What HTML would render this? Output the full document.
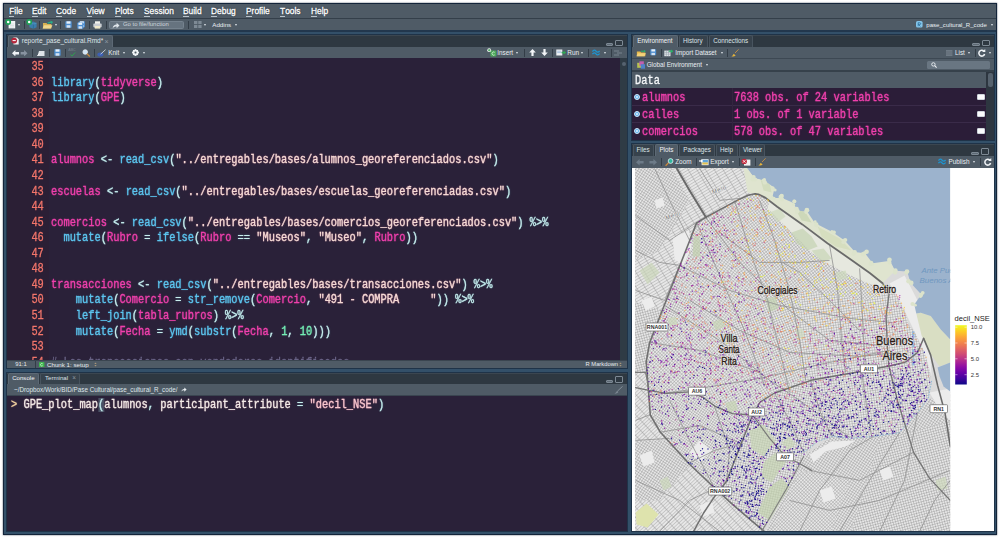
<!DOCTYPE html>
<html lang="en">
<head>
<meta charset="utf-8">
<title>RStudio - pase_cultural_R_code</title>
<style>
*{box-sizing:border-box;margin:0;padding:0}
html,body{width:1000px;height:538px;overflow:hidden;background:#fff}
body{position:relative;font-family:"Liberation Sans",sans-serif;font-size:6.6px;color:#e8edf1}
.a{position:absolute}
#win{left:3px;top:3px;width:994px;height:532px;background:#335069;border:1px solid #13243a;box-shadow:0 0 1.5px rgba(20,35,55,.8)}
.pn{position:absolute;outline:1px solid #1f3348}
.bar{background:#4f5b66}
.strip{background:#2e3841}
.code{background:#2a2139}
.menu span{position:absolute;top:2.95px;font-size:8.4px;line-height:1;color:#fff;-webkit-text-stroke:.28px #fff;text-shadow:0 0 1.5px rgba(20,30,40,.9)}
.menu span u{text-decoration:none;display:inline-block;line-height:1;padding-bottom:.6px;border-bottom:.8px solid #b9c3cb}
.t{position:absolute;white-space:nowrap;color:#e9eef2;line-height:1}
.sep{position:absolute;width:1px;height:8px;background:#333d47}
.tab{position:absolute;height:11.5px;background:#37424c;border:1px solid #48545f;border-bottom:none;border-radius:2px 2px 0 0}
.tab.on{background:#4f5b66;border-color:#5d6975}
.mono{font-family:"Liberation Mono",monospace;font-size:12.1px;white-space:pre;transform-origin:0 0;transform:scaleX(.8567);line-height:15.57px;letter-spacing:0;-webkit-text-stroke:.3px}
.ln{position:absolute;left:0;top:0;width:47.5px;text-align:right;color:#f4766b}
.v{color:#f040ad;text-shadow:0 0 2px rgba(236,63,169,.55)}
.f{color:#5cc6f0;text-shadow:0 0 2px rgba(95,195,236,.5)}
.o{color:#c9efef;text-shadow:0 0 2px rgba(120,220,230,.5)}
.s{color:#f6dcd6;text-shadow:0 0 2px rgba(250,120,160,.6)}
.n{color:#74efb6;text-shadow:0 0 2px rgba(116,239,182,.5)}
.c{color:#6a6487}
.w{color:#f3ece8;text-shadow:0 0 2px rgba(250,150,170,.5)}
.ic{position:absolute;border-radius:1px}
.dd{position:absolute;width:0;height:0;border-left:1.6px solid transparent;border-right:1.6px solid transparent;border-top:2px solid #dfe5ea}
</style>
</head>
<body>
<div id="win" class="a"></div>
<div class="pn" style="left:7px;top:35px;width:620px;height:333px"></div>
<div class="pn" style="left:7px;top:372.5px;width:620px;height:158.5px"></div>
<div class="pn" style="left:632px;top:35px;width:362px;height:104.5px"></div>
<div class="pn" style="left:632px;top:144px;width:362px;height:387px"></div>

<!-- menu bar -->
<div class="a bar menu" style="left:4px;top:4px;width:992px;height:14px">
<span style="left:5.2px"><u>F</u>ile</span>
<span style="left:28px"><u>E</u>dit</span>
<span style="left:52px"><u>C</u>ode</span>
<span style="left:82.5px"><u>V</u>iew</span>
<span style="left:111px"><u>P</u>lots</span>
<span style="left:140px"><u>S</u>ession</span>
<span style="left:179px"><u>B</u>uild</span>
<span style="left:207px"><u>D</u>ebug</span>
<span style="left:242px"><u>P</u>rofile</span>
<span style="left:276px"><u>T</u>ools</span>
<span style="left:307px"><u>H</u>elp</span>
</div>
<div class="a" style="left:4px;top:18px;width:992px;height:1px;background:#343f4a"></div>
<!-- main toolbar -->
<div class="a bar" id="tb" style="left:4px;top:19px;width:992px;height:11px"></div>
<div class="a" style="left:4px;top:30px;width:992px;height:2px;background:#22374d"></div>

<!-- ============ editor panel ============ -->
<div class="a strip" style="left:7px;top:35px;width:620px;height:12px;border-top:1px solid #3b4650"></div>
<div class="tab on" style="left:8px;top:35.4px;width:105px;height:12.1px"></div>
<div class="a bar" style="left:7px;top:47px;width:620px;height:11px"></div>
<div class="a code" id="ed" style="left:7px;top:58px;width:613px;height:302px;overflow:hidden">
<div class="a" style="left:0;top:0;width:42px;height:302px;background:#2b1f35"></div>
<div class="mono ln" style="top:2px;width:43px">35
36
37
38
39
40
41
42
43
44
45
46
47
48
49
50
51
52
53
54</div>
<div class="mono a" style="left:44.4px;top:2px">
<span class="f">library</span><span class="o">(</span><span class="v">tidyverse</span><span class="o">)</span>
<span class="f">library</span><span class="o">(</span><span class="v">GPE</span><span class="o">)</span>



<span class="v">alumnos</span> <span class="o">&lt;-</span> <span class="f">read_csv</span><span class="o">(</span><span class="s">"../entregables/bases/alumnos_georeferenciados.csv"</span><span class="o">)</span>

<span class="v">escuelas</span> <span class="o">&lt;-</span> <span class="f">read_csv</span><span class="o">(</span><span class="s">"../entregables/bases/escuelas_georeferenciadas.csv"</span><span class="o">)</span>

<span class="v">comercios</span> <span class="o">&lt;-</span> <span class="f">read_csv</span><span class="o">(</span><span class="s">"../entregables/bases/comercios_georeferenciados.csv"</span><span class="o">)</span> <span class="o">%&gt;%</span>
  <span class="f">mutate</span><span class="o">(</span><span class="v">Rubro</span> <span class="o">=</span> <span class="f">ifelse</span><span class="o">(</span><span class="v">Rubro</span> <span class="o">==</span> <span class="s">"Museos"</span><span class="o">,</span> <span class="s">"Museo"</span><span class="o">,</span> <span class="v">Rubro</span><span class="o">))</span>


<span class="v">transacciones</span> <span class="o">&lt;-</span> <span class="f">read_csv</span><span class="o">(</span><span class="s">"../entregables/bases/transacciones.csv"</span><span class="o">)</span> <span class="o">%&gt;%</span>
    <span class="f">mutate</span><span class="o">(</span><span class="v">Comercio</span> <span class="o">=</span> <span class="f">str_remove</span><span class="o">(</span><span class="v">Comercio</span><span class="o">,</span> <span class="s">"491 - COMPRA     "</span><span class="o">))</span> <span class="o">%&gt;%</span>
    <span class="f">left_join</span><span class="o">(</span><span class="v">tabla_rubros</span><span class="o">)</span> <span class="o">%&gt;%</span>
    <span class="f">mutate</span><span class="o">(</span><span class="v">Fecha</span> <span class="o">=</span> <span class="f">ymd</span><span class="o">(</span><span class="f">substr</span><span class="o">(</span><span class="v">Fecha</span><span class="o">,</span> <span class="n">1</span><span class="o">,</span> <span class="n">10</span><span class="o">)))</span>

<span class="c"># Las transacciones con vendedores identificados</span></div>
</div>
<!-- editor scrollbar -->
<div class="a" style="left:620px;top:58px;width:7px;height:302px;background:#2f3b45"></div>
<div class="a" style="left:621.5px;top:61.5px;width:4px;height:4px;border-radius:2px;background:#566270"></div>
<!-- status bar -->
<div class="a bar" style="left:7px;top:360px;width:620px;height:8px;border-top:1px solid #3a4550"></div>

<!-- ============ console panel ============ -->
<div class="a strip" style="left:7px;top:372.5px;width:620px;height:11.5px;border-top:1px solid #3b4650"></div>
<div class="tab on" style="left:8px;top:373px;width:31px;height:11.4px"></div>
<div class="tab" style="left:40px;top:373px;width:40px;height:11px"></div>
<div class="a bar" style="left:7px;top:384px;width:620px;height:11.5px;border-bottom:1px solid #3a4550"></div>
<div class="a code" style="left:7px;top:395.5px;width:620px;height:135.5px;overflow:hidden">
<div class="mono a" style="left:3.6px;top:2.2px"><span class="w" style="color:#f2d7a0">&gt;</span> <span class="w">GPE_plot_map</span><span class="o" style="background:#4a4f63">(</span><span class="w">alumnos</span><span class="o">,</span> <span class="w">participant_attribute</span> <span class="o">=</span> <span class="s" style="color:#f9c9cf">"decil_NSE"</span><span class="o">)</span></div>
</div>

<!-- ============ environment panel ============ -->
<div class="a strip" style="left:632px;top:35px;width:362px;height:12px;border-top:1px solid #3b4650"></div>
<div class="tab on" style="left:633px;top:35.4px;width:44.5px;height:12.1px"></div>
<div class="tab" style="left:678.5px;top:35.4px;width:29px;height:11.6px"></div>
<div class="tab" style="left:708.5px;top:35.4px;width:44px;height:11.6px"></div>
<div class="a bar" style="left:632px;top:47px;width:362px;height:11px"></div>
<div class="a" style="left:632px;top:58px;width:362px;height:1px;background:#3d4853"></div>
<div class="a bar" style="left:632px;top:59px;width:362px;height:11px"></div>
<div class="a" style="left:632px;top:70px;width:362px;height:1.5px;background:#36414b"></div>
<div class="a bar" style="left:632px;top:71.5px;width:354px;height:16.5px"></div>
<div class="a" style="left:632px;top:88px;width:354px;height:51.5px;background:#2b1d38"></div>
<div class="a" style="left:632px;top:104.6px;width:354px;height:1px;background:#3a2b49"></div>
<div class="a" style="left:632px;top:121.8px;width:354px;height:1px;background:#3a2b49"></div>
<div class="a" style="left:732px;top:88px;width:1px;height:51.5px;background:#33253f"></div>
<div class="a" style="left:986px;top:71.5px;width:8px;height:68px;background:#2d3640"></div>
<div class="a" style="left:987.5px;top:72.5px;width:5px;height:14.5px;border-radius:2px;background:#56626e"></div>

<!-- ============ plots panel ============ -->
<div class="a strip" style="left:632px;top:144px;width:362px;height:12px;border-top:1px solid #3b4650"></div>
<div class="tab" style="left:633px;top:144.4px;width:21px;height:11.6px"></div>
<div class="tab on" style="left:655px;top:144.4px;width:23px;height:12px"></div>
<div class="tab" style="left:679px;top:144.4px;width:35.5px;height:11.6px"></div>
<div class="tab" style="left:715.5px;top:144.4px;width:22px;height:11.6px"></div>
<div class="tab" style="left:738.5px;top:144.4px;width:26px;height:11.6px"></div>
<div class="a bar" style="left:632px;top:156px;width:362px;height:12px"></div>
<div class="a" style="left:632px;top:168px;width:362px;height:363px;background:#fff"></div>
<svg class="a" style="left:4.6px;top:19.4px" width="12" height="10" viewBox="0 0 12 10"><rect x="3.6" y="2" width="6.6" height="7.4" fill="#f1f4f6"/><path d="M5 5h4M5 6.5h4M5 8h4" stroke="#c5ccd3" stroke-width=".5"/><circle cx="3.2" cy="3" r="2.9" fill="#1fa257"/><circle cx="3.2" cy="3" r="1.25" fill="#fff"/></svg>
<div class="dd" style="left:18.4px;top:23.9px"></div>
<div class="sep" style="left:23.5px;top:20.5px;height:8px"></div>
<svg class="a" style="left:25.6px;top:19.4px" width="12" height="10" viewBox="0 0 12 10"><path d="M3.4 3.6l4-1 3.2 1.5v4.2l-3.2 1.5-4-1.5z" fill="#3a7fae"/><path d="M7.4 5v4.8" stroke="#2a6088" stroke-width=".6"/><path d="M3.4 3.6l4 1.4 3.2-.9" stroke="#5da3cf" stroke-width=".5" fill="none"/><circle cx="3.2" cy="3" r="2.9" fill="#1fa257"/><circle cx="3.2" cy="3" r="1.25" fill="#fff"/></svg>
<div class="sep" style="left:38.5px;top:20.5px;height:8px"></div>
<svg class="a" style="left:42.4px;top:20px" width="13" height="9" viewBox="0 0 13 9"><path d="M1 3h3.4l1 1h4v4.5h-8.4z" fill="#d6b053"/><path d="M0.5 8.5l1.5-3.3h8.4l-1.5 3.3z" fill="#f0d88f"/><path d="M5.6 3.1l3.4-1" stroke="#27ae8a" stroke-width="1.3"/><path d="M8.4 .6l2.8 1.3-2 2z" fill="#27ae8a"/></svg>
<div class="dd" style="left:55.4px;top:23.9px"></div>
<div class="sep" style="left:60px;top:20.5px;height:8px"></div>
<svg class="a" style="left:64.5px;top:21px" width="7" height="7" viewBox="0 0 7 7"><rect x=".3" y=".3" width="6.4" height="6.4" rx=".6" fill="#4e8fd0"/><rect x="1.5" y=".3" width="4" height="2.4" fill="#e8f0f8"/><rect x="1.6" y="4.2" width="3.8" height="2.5" fill="#d5e3f2"/></svg>
<svg class="a" style="left:77px;top:20.5px" width="8.5" height="8" viewBox="0 0 8.5 8"><g transform="translate(1.6,0) scale(.95)"><rect x=".3" y=".3" width="6.4" height="6.4" rx=".6" fill="#4e8fd0"/><rect x="1.5" y=".3" width="4" height="2.4" fill="#e8f0f8"/><rect x="1.6" y="4.2" width="3.8" height="2.5" fill="#d5e3f2"/></g><g transform="translate(0,1.3) scale(.95)"><rect x=".3" y=".3" width="6.4" height="6.4" rx=".6" fill="#4e8fd0"/><rect x="1.5" y=".3" width="4" height="2.4" fill="#e8f0f8"/><rect x="1.6" y="4.2" width="3.8" height="2.5" fill="#d5e3f2"/></g></svg>
<div class="sep" style="left:88.5px;top:20.5px;height:8px"></div>
<svg class="a" style="left:93px;top:20.5px" width="9" height="8" viewBox="0 0 9 8"><rect x="2" y="0.3" width="5" height="3" fill="#f3f3ee"/><rect x=".3" y="2.6" width="8.4" height="3.8" rx=".8" fill="#c9cdd2"/><rect x="1.8" y="5" width="5.4" height="2.6" fill="#f1e9c9"/></svg>
<div class="sep" style="left:106px;top:20.5px;height:8px"></div>
<div class="a" style="left:109px;top:20.8px;width:74.5px;height:7.8px;background:#66737f;border-radius:1.5px;border:0.5px solid #75828e"></div>
<svg class="a" style="left:112px;top:21.5px" width="8" height="7" viewBox="0 0 8 7"><path d="M.6 6.4c.4-2.6 1.8-3.8 4-3.8V.8l2.9 2.7-2.9 2.7V4.4c-1.8 0-3 .5-4 2z" fill="#dfe5ea"/></svg>
<div class="t" style="left:123px;top:22.15px;font-size:5.9px;color:#cfd6dc">Go to file/function</div>
<div class="sep" style="left:188px;top:20.5px;height:8px"></div>
<svg class="a" style="left:193.5px;top:21px" width="8" height="7" viewBox="0 0 8 7"><rect x="0" y="0" width="7.6" height="7" fill="#7e8a95"/><path d="M0 3.5h8M3.8 0v7" stroke="#4f5b66" stroke-width=".9"/></svg>
<div class="dd" style="left:203.9px;top:23.9px"></div>
<div class="t" style="left:212.3px;top:22.00px;font-size:6.2px">Addins</div>
<div class="dd" style="left:234.9px;top:23.9px"></div>
<svg class="a" style="left:915.5px;top:21px" width="7" height="7" viewBox="0 0 7 7"><rect width="6.6" height="6.6" rx="1.6" fill="#84c5ea"/><path d="M2.2 1.6v3.6M2.2 1.8h1.6c1.3 0 1.3 1.7 0 1.7h-1.4l2 1.8" stroke="#2a6d9a" stroke-width=".8" fill="none"/></svg>
<div class="t" style="left:926.3px;top:22.06px;font-size:6.08px">pase_cultural_R_code</div>
<div class="dd" style="left:991.0px;top:23.9px"></div>
<svg class="a" style="left:11px;top:37.2px" width="8" height="8" viewBox="0 0 8 8"><path d="M2.5 .5h3.5l1.7 1.7v5.3h-5.2z" fill="#f1f1f1"/><circle cx="3.2" cy="3.6" r="2.9" fill="#b5273b"/><path d="M1.6 3.6h3.2" stroke="#fff" stroke-width="1"/></svg>
<div class="t" style="left:21.8px;top:38.03px;font-size:6.55px;color:#dfe5ea">reporte_pase_cultural.Rmd*</div>
<div class="t" style="left:104.5px;top:37.80px;font-size:7px;color:#8d99a4">×</div>
<div class="a" style="left:605.5px;top:43px;width:7.5px;height:3px;border:1px solid #7d8994;border-radius:1px;background:#5d6974"></div><div class="a" style="left:615.0px;top:39.5px;width:7.8px;height:6.5px;border:1px solid #7d8994;border-top-width:1.8px;border-radius:1px"></div>
<svg class="a" style="left:12px;top:49.5px" width="16" height="6.5" viewBox="0 0 16 6.5"><path d="M0 3.2L3.4 0v1.9h3.6v2.6H3.4v1.9z" fill="#eef2f5"/><path d="M15.5 3.2L12.1 0v1.9H8.7v2.6h3.4v1.9z" fill="#8893a0"/></svg>
<div class="sep" style="left:32px;top:48.6px;height:8px"></div>
<svg class="a" style="left:37px;top:49.5px" width="8" height="6.5" viewBox="0 0 8 6.5"><path d="M2 1h5.5v5H.5z" fill="#dde3e8"/><path d="M.3 6L2.6 3.3" stroke="#fff" stroke-width=".8"/></svg>
<div class="sep" style="left:48.5px;top:48.6px;height:8px"></div>
<svg class="a" style="left:54px;top:49.3px" width="7" height="7" viewBox="0 0 7 7"><rect x=".3" y=".3" width="6.4" height="6.4" rx=".6" fill="#4e8fd0"/><rect x="1.5" y=".3" width="4" height="2.4" fill="#e8f0f8"/><rect x="1.6" y="4.2" width="3.8" height="2.5" fill="#d5e3f2"/></svg>
<div class="sep" style="left:64.5px;top:48.6px;height:8px"></div>
<div class="t" style="left:68.3px;top:49.00px;font-size:3.6px;color:#77838f">ABC</div>
<svg class="a" style="left:70px;top:51.5px" width="6" height="4.5" viewBox="0 0 6 4.5"><path d="M.5 2.4l1.6 1.6L5.2.4" stroke="#2fa04e" stroke-width="1" fill="none"/></svg>
<svg class="a" style="left:81.5px;top:49px" width="9" height="8" viewBox="0 0 9 8"><circle cx="3.2" cy="3" r="2.3" fill="#cfe4f6" stroke="#e9eef3" stroke-width=".8"/><path d="M5 4.8l2.8 2.6" stroke="#c98a3c" stroke-width="1.3"/></svg>
<div class="sep" style="left:93.5px;top:48.6px;height:8px"></div>
<svg class="a" style="left:97px;top:49px" width="10" height="8" viewBox="0 0 10 8"><ellipse cx="3.4" cy="5.6" rx="3" ry="2" fill="#3d5fb3"/><path d="M3.6 5.2L8.6 .6" stroke="#ccd4dc" stroke-width=".9"/></svg>
<div class="t" style="left:108.3px;top:50.05px;font-size:6.3px">Knit</div>
<div class="dd" style="left:123.2px;top:52.0px"></div>
<svg class="a" style="left:132.3px;top:49.2px" width="7" height="7" viewBox="0 0 7 7"><circle cx="3.5" cy="3.5" r="2.3" fill="none" stroke="#f0f3f6" stroke-width="1.6"/><path d="M3.5 0v7M0 3.5h7M1 1l5 5M6 1L1 6" stroke="#f0f3f6" stroke-width=".9"/><circle cx="3.5" cy="3.5" r="1" fill="#4f5b66"/></svg>
<div class="dd" style="left:143.20000000000002px;top:52.0px"></div>
<svg class="a" style="left:486.5px;top:48.3px" width="10" height="9" viewBox="0 0 10 9"><rect x="3.4" y="2.6" width="6" height="6" rx="1" fill="#4caa5a"/><path d="M7.6 4.3a1.6 1.6 0 1 0 0 2.6" stroke="#e8f5e9" stroke-width=".8" fill="none"/><circle cx="2.2" cy="2.2" r="1.9" fill="#f4f7f4"/><path d="M1 2.2h2.4M2.2 1v2.4" stroke="#2c9a48" stroke-width=".8"/></svg>
<div class="t" style="left:497.3px;top:50.05px;font-size:6.3px">Insert</div>
<div class="dd" style="left:516.4px;top:52.0px"></div>
<div class="sep" style="left:523.5px;top:48.6px;height:8px"></div>
<svg class="a" style="left:529.3px;top:49.3px" width="7" height="7" viewBox="0 0 7 7"><path d="M3.5 0L6.8 3.4H4.6V7H2.4V3.4H.2z" fill="#f2f5f7"/></svg>
<svg class="a" style="left:541.3px;top:49.3px" width="7" height="7" viewBox="0 0 7 7"><path d="M3.5 7L6.8 3.6H4.6V0H2.4v3.6H.2z" fill="#f2f5f7"/></svg>
<div class="sep" style="left:551.5px;top:48.6px;height:8px"></div>
<svg class="a" style="left:555.5px;top:49.3px" width="10.5" height="7" viewBox="0 0 10.5 7"><rect x=".3" y=".5" width="6" height="6" fill="#eef1f4"/><path d="M1.2 2.2h4.2M1.2 3.6h4.2" stroke="#7fa3cf" stroke-width=".6"/><path d="M5.6 3.6h2.4" stroke="#2faa55" stroke-width="1.4"/><path d="M7.6 1.6l2.7 2-2.7 2z" fill="#2faa55"/></svg>
<div class="t" style="left:567.3px;top:50.00px;font-size:6.4px">Run</div>
<div class="dd" style="left:580.6999999999999px;top:52.0px"></div>
<div class="sep" style="left:587.5px;top:48.6px;height:8px"></div>
<svg class="a" style="left:592px;top:49.2px" width="8.2" height="7.2" viewBox="0 0 8.2 7.2"><path d="M.5 2.6C1.5 0.8 3 .8 4 2.2S6.5 3.6 7.6 1.9M.5 5.2C1.5 3.4 3 3.4 4 4.8S6.5 6.2 7.6 4.5" stroke="#1d95d3" stroke-width="1.25" fill="none"/></svg>
<div class="dd" style="left:603.6999999999999px;top:52.0px"></div>
<div class="sep" style="left:610.5px;top:48.6px;height:8px"></div>
<svg class="a" style="left:614px;top:49.8px" width="8" height="6" viewBox="0 0 8 6"><path d="M0 1h5M3 3h5M0 5h5" stroke="#7d8893" stroke-width=".9"/></svg>
<div class="t" style="left:15.3px;top:362.15px;font-size:5.9px;color:#e3e8ec">91:1</div>
<div class="sep" style="left:35.3px;top:361.25px;height:6.5px"></div>
<svg class="a" style="left:39px;top:361.8px" width="5.6" height="5.6" viewBox="0 0 5.6 5.6"><rect width="5.4" height="5.4" rx=".8" fill="#3db54d"/><path d="M3.7 1.8a1.3 1.3 0 1 0 0 1.9" stroke="#e8f7ea" stroke-width=".7" fill="none"/></svg>
<div class="t" style="left:47px;top:362.00px;font-size:6.2px;color:#e6ebef">Chunk 1: setup</div>
<svg class="a" style="left:93.5px;top:362px" width="3" height="5" viewBox="0 0 3 5"><path d="M.3 2L1.5 .4 2.7 2zM.3 3L1.5 4.6 2.7 3z" fill="#a9967a"/></svg>
<div class="t" style="left:585.5px;top:362.20px;font-size:5.8px;color:#e6ebef">R Markdown</div>
<svg class="a" style="left:619.3px;top:362px" width="3" height="5" viewBox="0 0 3 5"><path d="M.3 2L1.5 .4 2.7 2zM.3 3L1.5 4.6 2.7 3z" fill="#a9967a"/></svg>
<div class="t" style="left:12.2px;top:375.35px;font-size:6.1px;color:#f0f3f6">Console</div>
<div class="t" style="left:45px;top:375.35px;font-size:6.1px;color:#dde3e8">Terminal</div>
<div class="t" style="left:72.3px;top:375.20px;font-size:6.4px;color:#8d99a4">×</div>
<div class="a" style="left:605.5px;top:379.5px;width:7.5px;height:3px;border:1px solid #7d8994;border-radius:1px;background:#5d6974"></div><div class="a" style="left:615.0px;top:376.0px;width:7.8px;height:6.5px;border:1px solid #7d8994;border-top-width:1.8px;border-radius:1px"></div>
<div class="t" style="left:14px;top:387.25px;font-size:6.3px;color:#dfe5ea">~/Dropbox/Work/BID/Pase Cultural/pase_cultural_R_code/</div>
<svg class="a" style="left:180.5px;top:387.3px" width="6" height="5" viewBox="0 0 6 5"><path d="M.4 4.6c.3-1.9 1.3-2.7 2.9-2.7V.5l2.3 2.1-2.3 2.1V3.3c-1.3 0-2.2.3-2.9 1.3z" fill="#e8edf1"/></svg>
<svg class="a" style="left:613.5px;top:385.8px" width="9" height="8" viewBox="0 0 9 8"><path d="M8.6.3L3.4 5.2" stroke="#8a959f" stroke-width=".9"/><path d="M.4 7.6c1-.4 2-1.5 2.6-2.8l1.4 1.2C3.6 7 2 7.8.4 7.6z" fill="#7d8893"/></svg>
<div class="t" style="left:637.2px;top:38.15px;font-size:6.3px;color:#f0f3f6">Environment</div>
<div class="t" style="left:683px;top:38.15px;font-size:6.3px;color:#dde3e8">History</div>
<div class="t" style="left:713.2px;top:38.15px;font-size:6.3px;color:#dde3e8">Connections</div>
<div class="a" style="left:972.3px;top:43px;width:7.5px;height:3px;border:1px solid #7d8994;border-radius:1px;background:#5d6974"></div><div class="a" style="left:981.8px;top:39.5px;width:7.8px;height:6.5px;border:1px solid #7d8994;border-top-width:1.8px;border-radius:1px"></div>
<svg class="a" style="left:636px;top:48.6px" width="11" height="8" viewBox="0 0 11 8"><g transform="scale(.85)"><path d="M1 3h4l1 1h5v4.5h-10z" fill="#e5b84a"/><path d="M0.5 8.5l1.6-3.5h9.5l-1.6 3.5z" fill="#f3d27a"/><path d="M6 2.6h4" stroke="#2bb36a" stroke-width="1.2"/><path d="M9.5 1l2 1.6-2 1.6z" fill="#2bb36a"/></g></svg>
<svg class="a" style="left:650px;top:49.3px" width="7" height="7" viewBox="0 0 7 7"><g transform="scale(.92)"><rect x=".3" y=".3" width="6.4" height="6.4" rx=".6" fill="#4e8fd0"/><rect x="1.5" y=".3" width="4" height="2.4" fill="#e8f0f8"/><rect x="1.6" y="4.2" width="3.8" height="2.5" fill="#d5e3f2"/></g></svg>
<div class="sep" style="left:660.5px;top:48.6px;height:8px"></div>
<svg class="a" style="left:664px;top:49px" width="10" height="7.5" viewBox="0 0 10 7.5"><rect x=".3" y="1.6" width="6.2" height="5.6" fill="#dfe4e8"/><path d="M.3 3.4h6.2M.3 5.2h6.2M2.4 1.6v5.6M4.5 1.6v5.6" stroke="#8d98a3" stroke-width=".5"/><path d="M4.8 2.2h2.6" stroke="#2bb36a" stroke-width="1.2"/><path d="M7 .5l2.4 1.7L7 3.9z" fill="#2bb36a"/></svg>
<div class="t" style="left:675.3px;top:50.05px;font-size:6.3px">Import Dataset</div>
<div class="dd" style="left:720.6999999999999px;top:52.0px"></div>
<div class="sep" style="left:727.3px;top:48.6px;height:8px"></div>
<svg class="a" style="left:730.5px;top:48.7px" width="8" height="8" viewBox="0 0 8 8"><path d="M7.6.3L4 4" stroke="#b98a4a" stroke-width="1"/><path d="M.4 7.4c.8-.3 1.8-1.4 2.3-2.6l1.9 1.6C3.8 7.2 2 7.8.4 7.4z" fill="#e3b23c"/></svg>
<svg class="a" style="left:945.5px;top:49.5px" width="7" height="6.5" viewBox="0 0 7 6.5"><rect width="6.4" height="6" fill="#6e7a85"/><path d="M0 2h6.4M0 4h6.4" stroke="#5a6671" stroke-width=".6"/></svg>
<div class="t" style="left:955px;top:50.05px;font-size:6.3px">List</div>
<div class="dd" style="left:967.6999999999999px;top:52.0px"></div>
<div class="sep" style="left:975.3px;top:48.6px;height:8px"></div>
<svg class="a" style="left:978px;top:49px" width="8" height="7.5" viewBox="0 0 8 7.5"><path d="M5.9 2.2A2.9 2.9 0 1 0 6.6 5" stroke="#f0f3f6" stroke-width="1.5" fill="none"/><path d="M4.2 2.9L7.4 3.1 7.2 0z" fill="#f0f3f6"/></svg>
<div class="dd" style="left:988.6999999999999px;top:52.0px"></div>
<svg class="a" style="left:636.6px;top:60.6px" width="8.5" height="8" viewBox="0 0 8.5 8"><rect x=".2" y="1.8" width="4.6" height="5" fill="#b7c24f"/><rect x="2.4" y=".3" width="4.4" height="4.6" fill="#c25fb0"/><rect x="3.8" y="3.2" width="4.2" height="4.5" fill="#4f82c8"/></svg>
<div class="t" style="left:646.7px;top:62.05px;font-size:6.3px">Global Environment</div>
<div class="dd" style="left:705.9px;top:63.99999999999999px"></div>
<div class="a" style="left:927px;top:60.8px;width:62.5px;height:8px;background:#697682;border-radius:1.5px"></div>
<svg class="a" style="left:930.5px;top:61.8px" width="7" height="6.5" viewBox="0 0 7 6.5"><circle cx="2.4" cy="2.4" r="1.7" fill="none" stroke="#eef2f5" stroke-width=".9"/><path d="M3.7 3.7L5.6 5.6" stroke="#eef2f5" stroke-width="1.1"/></svg>
<div class="mono a" style="left:634.5px;top:73.6px;color:#f6f8fa;line-height:15.5px">Data</div>
<div class="a" style="left:634.3px;top:94.1px;width:5.8px;height:5.8px;border-radius:3px;background:#5fb0ea;border:.8px solid #cfe6f8"></div>
<div class="a" style="left:636.2px;top:96.0px;width:2px;height:2px;border-radius:1px;background:#e6f2fc"></div>
<div class="mono a v" style="left:642.3px;top:91.1px;line-height:15.5px">alumnos</div>
<div class="mono a v" style="left:733.6px;top:91.1px;line-height:15.5px">7638 obs. of 24 variables</div>
<div class="a" style="left:977px;top:94.0px;width:7.6px;height:6px;background:#fbfcfd;border-radius:1px;border:.5px solid #cfd6dc"></div>
<div class="a" style="left:634.3px;top:111.14999999999999px;width:5.8px;height:5.8px;border-radius:3px;background:#5fb0ea;border:.8px solid #cfe6f8"></div>
<div class="a" style="left:636.2px;top:113.05px;width:2px;height:2px;border-radius:1px;background:#e6f2fc"></div>
<div class="mono a v" style="left:642.3px;top:108.14999999999999px;line-height:15.5px">calles</div>
<div class="mono a v" style="left:733.6px;top:108.14999999999999px;line-height:15.5px">1 obs. of 1 variable</div>
<div class="a" style="left:977px;top:111.05px;width:7.6px;height:6px;background:#fbfcfd;border-radius:1px;border:.5px solid #cfd6dc"></div>
<div class="a" style="left:634.3px;top:128.2px;width:5.8px;height:5.8px;border-radius:3px;background:#5fb0ea;border:.8px solid #cfe6f8"></div>
<div class="a" style="left:636.2px;top:130.1px;width:2px;height:2px;border-radius:1px;background:#e6f2fc"></div>
<div class="mono a v" style="left:642.3px;top:125.19999999999999px;line-height:15.5px">comercios</div>
<div class="mono a v" style="left:733.6px;top:125.19999999999999px;line-height:15.5px">578 obs. of 47 variables</div>
<div class="a" style="left:977px;top:128.1px;width:7.6px;height:6px;background:#fbfcfd;border-radius:1px;border:.5px solid #cfd6dc"></div>
<div class="t" style="left:636.4px;top:146.95px;font-size:6.3px;color:#dde3e8">Files</div>
<div class="t" style="left:659.4px;top:146.95px;font-size:6.3px;color:#f0f3f6">Plots</div>
<div class="t" style="left:683.2px;top:146.95px;font-size:6.3px;color:#dde3e8">Packages</div>
<div class="t" style="left:720px;top:146.95px;font-size:6.3px;color:#dde3e8">Help</div>
<div class="t" style="left:743px;top:146.95px;font-size:6.3px;color:#dde3e8">Viewer</div>
<div class="a" style="left:971.3px;top:151.6px;width:7.5px;height:3px;border:1px solid #7d8994;border-radius:1px;background:#5d6974"></div><div class="a" style="left:980.8px;top:148.1px;width:7.8px;height:6.5px;border:1px solid #7d8994;border-top-width:1.8px;border-radius:1px"></div>
<svg class="a" style="left:636px;top:159px" width="22" height="6.5" viewBox="0 0 22 6.5"><path d="M0 3.2L3.6 0v1.9h4v2.6h-4v1.9z" fill="#6d7b88"/><path d="M21 3.2L17.4 0v1.9h-4v2.6h4v1.9z" fill="#6d7b88"/></svg>
<div class="sep" style="left:660.5px;top:158.0px;height:8px"></div>
<svg class="a" style="left:664.5px;top:158px" width="9" height="8.5" viewBox="0 0 9 8.5"><path d="M.6 7.8L3.6 4.6" stroke="#c98a3c" stroke-width="1.3"/><circle cx="5.6" cy="3" r="2.4" fill="#2fb8a0" stroke="#e9eef3" stroke-width=".8"/></svg>
<div class="t" style="left:675.2px;top:159.40px;font-size:6.4px">Zoom</div>
<div class="sep" style="left:695.5px;top:158.0px;height:8px"></div>
<svg class="a" style="left:698.6px;top:158.3px" width="10" height="8" viewBox="0 0 10 8"><rect x="2.6" y="1.2" width="7" height="6" fill="#e9eef2"/><rect x="3.3" y="1.9" width="5.6" height="2.6" fill="#5da3dc"/><rect x="3.3" y="4.5" width="5.6" height="2" fill="#e2c04e"/><path d="M0 3h3" stroke="#fff" stroke-width="1.2"/><path d="M2 1.2l2.2 1.8L2 4.8z" fill="#fff"/></svg>
<div class="t" style="left:710.3px;top:159.40px;font-size:6.4px">Export</div>
<div class="dd" style="left:731.6999999999999px;top:161.4px"></div>
<div class="sep" style="left:738.5px;top:158.0px;height:8px"></div>
<svg class="a" style="left:741px;top:158px" width="10" height="8" viewBox="0 0 10 8"><rect x="3" y="1.6" width="6.4" height="6" fill="#f2f2f2"/><circle cx="3.2" cy="3.4" r="2.7" fill="#c0273a"/><path d="M2 2.2l2.4 2.4M4.4 2.2L2 4.6" stroke="#fff" stroke-width=".9"/></svg>
<div class="sep" style="left:754.5px;top:158.0px;height:8px"></div>
<svg class="a" style="left:757.6px;top:158px" width="8" height="8" viewBox="0 0 8 8"><path d="M7.6.3L4 4" stroke="#b98a4a" stroke-width="1"/><path d="M.4 7.4c.8-.3 1.8-1.4 2.3-2.6l1.9 1.6C3.8 7.2 2 7.8.4 7.4z" fill="#e3b23c"/></svg>
<svg class="a" style="left:937.6px;top:158.3px" width="8.2" height="7.2" viewBox="0 0 8.2 7.2"><path d="M.5 2.6C1.5 0.8 3 .8 4 2.2S6.5 3.6 7.6 1.9M.5 5.2C1.5 3.4 3 3.4 4 4.8S6.5 6.2 7.6 4.5" stroke="#1d95d3" stroke-width="1.25" fill="none"/></svg>
<div class="t" style="left:948.5px;top:159.40px;font-size:6.4px">Publish</div>
<div class="dd" style="left:972.6999999999999px;top:161.4px"></div>
<div class="sep" style="left:979.8px;top:158.0px;height:8px"></div>
<svg class="a" style="left:983.6px;top:158.2px" width="8" height="7.5" viewBox="0 0 8 7.5"><path d="M5.9 2.2A2.9 2.9 0 1 0 6.6 5" stroke="#f0f3f6" stroke-width="1.5" fill="none"/><path d="M4.2 2.9L7.4 3.1 7.2 0z" fill="#f0f3f6"/></svg>
<svg class="a" style="left:635.4px;top:167.6px" width="315.3" height="363.4" viewBox="635.4 167.6 315.3 363.4">
<defs>
<pattern id="pa" width="2.4" height="2.4" patternUnits="userSpaceOnUse" patternTransform="rotate(-38)"><rect width="2.4" height="2.4" fill="#e8e8e8"/><path d="M0 0H2.4M0 0V2.4" stroke="#888" stroke-width="0.64"/></pattern>
<pattern id="pb" width="2.3" height="2.7" patternUnits="userSpaceOnUse" patternTransform="rotate(-52)"><rect width="2.3" height="2.7" fill="#e8e8e8"/><path d="M0 0H2.3M0 0V2.7" stroke="#888" stroke-width="0.64"/></pattern>
<pattern id="pc" width="2.4" height="2.4" patternUnits="userSpaceOnUse" patternTransform="rotate(28)"><rect width="2.4" height="2.4" fill="#e8e8e8"/><path d="M0 0H2.4M0 0V2.4" stroke="#888" stroke-width="0.64"/></pattern>
<pattern id="pd" width="2.5" height="2.5" patternUnits="userSpaceOnUse" patternTransform="rotate(-8)"><rect width="2.5" height="2.5" fill="#e8e8e8"/><path d="M0 0H2.5M0 0V2.5" stroke="#888" stroke-width="0.64"/></pattern>
<pattern id="pe" width="2.3" height="2.6" patternUnits="userSpaceOnUse" patternTransform="rotate(44)"><rect width="2.3" height="2.6" fill="#e8e8e8"/><path d="M0 0H2.3M0 0V2.6" stroke="#888" stroke-width="0.64"/></pattern>
<pattern id="pf" width="2.2" height="4.4" patternUnits="userSpaceOnUse" patternTransform="rotate(-30)"><rect width="2.2" height="4.4" fill="#e8e8e8"/><path d="M0 0H2.2M0 0V4.4" stroke="#888" stroke-width="0.64"/></pattern>
<pattern id="pg" width="2.3" height="2.3" patternUnits="userSpaceOnUse" patternTransform="rotate(35)"><rect width="2.3" height="2.3" fill="#e8e8e8"/><path d="M0 0H2.3M0 0V2.3" stroke="#888" stroke-width="0.64"/></pattern>
<pattern id="ph" width="2.4" height="2.4" patternUnits="userSpaceOnUse" patternTransform="rotate(12)"><rect width="2.4" height="2.4" fill="#e8e8e8"/><path d="M0 0H2.4M0 0V2.4" stroke="#888" stroke-width="0.64"/></pattern>
<pattern id="pi" width="2.4" height="2.4" patternUnits="userSpaceOnUse" patternTransform="rotate(-22)"><rect width="2.4" height="2.4" fill="#e8e8e8"/><path d="M0 0H2.4M0 0V2.4" stroke="#888" stroke-width="0.64"/></pattern>
<pattern id="pj" width="2.4" height="2.6" patternUnits="userSpaceOnUse" patternTransform="rotate(58)"><rect width="2.4" height="2.6" fill="#e8e8e8"/><path d="M0 0H2.4M0 0V2.6" stroke="#888" stroke-width="0.64"/></pattern>
<pattern id="po1" width="7.5" height="2.7" patternUnits="userSpaceOnUse" patternTransform="rotate(-31)"><rect width="7.5" height="2.7" fill="#e7e7e7"/><path d="M0 0H7.5M0 0V2.7" stroke="#858585" stroke-width="0.68"/></pattern>
<pattern id="po2" width="7" height="2.6" patternUnits="userSpaceOnUse" patternTransform="rotate(-43)"><rect width="7" height="2.6" fill="#e7e7e7"/><path d="M0 0H7M0 0V2.6" stroke="#858585" stroke-width="0.66"/></pattern>
<pattern id="po3" width="2.5" height="2.5" patternUnits="userSpaceOnUse" patternTransform="rotate(33)"><rect width="2.5" height="2.5" fill="#e6e6e6"/><path d="M0 0H2.5M0 0V2.5" stroke="#858585" stroke-width="0.66"/></pattern>
<pattern id="po4" width="2.5" height="2.5" patternUnits="userSpaceOnUse" patternTransform="rotate(-15)"><rect width="2.5" height="2.5" fill="#e6e6e6"/><path d="M0 0H2.5M0 0V2.5" stroke="#858585" stroke-width="0.66"/></pattern>
<clipPath id="mc"><rect x="635.4" y="167.6" width="315.3" height="363.4"/></clipPath>
<clipPath id="cc"><polygon points="755.5,193.4 748.0,195.0 740.4,198.5 706.3,216.9 697.0,222.6 680.2,265.4 650.0,342.4 646.6,361.8 648.6,387.1 650.7,414.6 660.8,431.9 689.7,463.6 715.6,488.1 732.9,504.0 753.0,521.2 764.6,531.0 768.0,521.0 786.0,490.0 804.0,456.0 818.0,441.0 832.5,436.0 852.5,437.8 874.2,436.0 899.6,432.4 917.7,412.5 928.6,398.0 931.0,376.0 927.0,352.0 918.0,336.0 908.0,322.0 904.0,300.0 895.0,287.0 883.0,282.9 870.5,272.9 852.9,260.3 827.8,242.8 802.7,224.0 777.6,206.4 766.0,197.5 758.8,193.9 755.5,193.4"/></clipPath>
<filter id="bl" x="-2%" y="-2%" width="104%" height="104%"><feGaussianBlur stdDeviation=".38"/></filter>
<filter id="bl2" x="-2%" y="-2%" width="104%" height="104%"><feGaussianBlur stdDeviation=".3"/></filter>
</defs>
<g clip-path="url(#mc)">
<g filter="url(#bl)">
<rect x="635.4" y="167.6" width="315.3" height="363.4" fill="#dadada"/>
<polygon points="630.0,160.0 765.0,160.0 765.0,200.0 700.0,225.0 640.0,385.0 630.0,385.0" fill="url(#po1)"/>
<polygon points="630.0,160.0 668.0,160.0 690.0,200.0 660.0,250.0 630.0,262.0" fill="url(#po3)"/>
<polygon points="630.0,300.0 664.0,310.0 650.0,342.0 646.0,372.0 630.0,372.0" fill="url(#po4)"/>
<polygon points="630.0,372.0 648.0,372.0 650.0,414.0 700.0,470.0 770.0,535.0 630.0,535.0" fill="url(#po2)"/>
<polygon points="630.0,440.0 672.0,440.0 690.0,465.0 660.0,500.0 630.0,500.0" fill="url(#po3)"/>
<polygon points="764.0,535.0 804.0,456.0 832.0,436.0 900.0,432.0 930.0,398.0 955.0,390.0 955.0,535.0" fill="url(#po3)"/>
<polygon points="850.0,535.0 880.0,440.0 955.0,420.0 955.0,535.0" fill="url(#po4)"/>
<polygon points="770.0,535.0 800.0,470.0 850.0,480.0 830.0,535.0" fill="url(#pe)"/>
<g clip-path="url(#cc)">
<rect x="635.4" y="167.6" width="315.3" height="363.4" fill="url(#pc)"/>
<polygon points="700.0,215.0 760.0,190.0 890.0,285.0 870.0,300.0 800.0,290.0 760.0,300.0 730.0,260.0" fill="url(#pa)"/>
<polygon points="700.0,215.0 730.0,260.0 760.0,300.0 720.0,330.0 690.0,300.0 675.0,270.0" fill="url(#pb)"/>
<polygon points="800.0,290.0 870.0,300.0 895.0,285.0 930.0,340.0 930.0,400.0 900.0,432.0 850.0,437.0 830.0,400.0 800.0,380.0" fill="url(#pd)"/>
<polygon points="760.0,300.0 800.0,290.0 800.0,380.0 775.0,392.0 740.0,370.0 720.0,330.0" fill="url(#pi)"/>
<polygon points="650.0,342.0 690.0,300.0 720.0,330.0 740.0,370.0 700.0,395.0 648.0,388.0" fill="url(#pe)"/>
<polygon points="648.0,388.0 700.0,395.0 753.0,415.0 727.0,480.0 715.0,488.0 660.0,432.0" fill="url(#pg)"/>
<polygon points="753.0,415.0 775.0,392.0 800.0,380.0 830.0,400.0 850.0,437.0 832.0,436.0 804.0,456.0 764.0,531.0 715.0,488.0 727.0,480.0" fill="url(#ph)"/>
<polygon points="740.0,370.0 775.0,392.0 753.0,415.0 700.0,395.0" fill="url(#pj)"/>
</g>
<polygon points="673.0,237.0 689.0,230.0 692.0,247.0 684.0,265.0 675.0,259.0" fill="#ececec"/>
<polygon points="655.0,200.0 663.0,197.0 665.0,205.0 657.0,208.0" fill="#ececec"/>
<polygon points="642.0,300.0 652.0,296.0 655.0,306.0 646.0,310.0" fill="#ececec"/>
<polygon points="640.0,455.0 652.0,450.0 655.0,462.0 644.0,466.0" fill="#ececec"/>
<polygon points="700.0,505.0 712.0,500.0 715.0,512.0 704.0,516.0" fill="#ececec"/>
<polygon points="820.0,490.0 832.0,486.0 836.0,498.0 824.0,502.0" fill="#ececec"/>
<polygon points="880.0,470.0 890.0,466.0 894.0,476.0 884.0,480.0" fill="#ececec"/>
<polygon points="890.0,283.0 905.0,275.0 918.0,300.0 930.0,340.0 932.0,376.0 925.0,352.0 912.0,325.0 900.0,300.0" fill="#ececec"/>
<polygon points="810.0,454.0 832.0,441.0 856.0,440.0 846.0,446.0 826.0,451.0 814.0,462.0" fill="#ececec"/>
<polygon points="930.0,392.0 950.7,388.0 950.7,420.0 940.0,410.0" fill="#ececec"/>
<polygon points="700.0,440.0 712.0,450.0 700.0,462.0 690.0,452.0" fill="#ececec"/>
<polygon points="770.0,200.0 777.6,206.4 802.7,224.0 827.8,242.8 852.9,260.3 870.5,272.9 883.0,282.9 880.0,287.0 864.0,281.0 845.0,272.0 826.0,262.0 812.0,252.0 796.0,236.0 780.0,220.0 768.0,208.0" fill="#e6e8df"/>
<polygon points="747.5,167.5 755.0,177.5 765.0,180.0 775.0,187.6 772.6,197.6 782.6,197.6 794.0,202.6 797.7,210.0 807.7,211.4 815.3,222.7 832.8,231.5 845.4,240.3 855.4,251.6 865.4,252.8 873.0,262.8 890.5,260.3 895.5,270.4 883.0,282.9 870.5,272.9 852.9,260.3 827.8,242.8 802.7,224.0 777.6,206.4 766.0,197.5 758.8,193.9 755.5,193.4 748.0,192.0 744.0,168.0" fill="#dfe4cf"/>
<g opacity=".7">
<polygon points="760.0,176.0 770.0,182.0 772.0,192.0 764.0,190.0" fill="#cdd9b8"/>
<polygon points="795.0,207.0 806.0,212.0 812.0,222.0 802.0,220.0" fill="#c6d4b0"/>
<polygon points="818.0,226.0 840.0,238.0 852.0,250.0 836.0,246.0 822.0,236.0" fill="#d3dcb9"/>
<polygon points="792.0,232.0 803.0,228.0 812.0,236.0 818.0,246.0 808.0,250.0 797.0,243.0" fill="#c5d3b2"/>
<polygon points="812.0,250.0 824.0,248.0 832.0,258.0 822.0,262.0" fill="#c9d6b6"/>
<polygon points="770.0,212.0 780.0,208.0 786.0,216.0 778.0,222.0" fill="#cfdabd"/>
<polygon points="766.0,298.0 776.0,296.0 779.0,308.0 769.0,312.0" fill="#c3d2b0"/>
<polygon points="694.0,236.0 700.0,236.0 701.0,256.0 693.0,256.0" fill="#c2d0ae"/>
<polygon points="640.0,270.0 652.0,262.0 660.0,272.0 648.0,284.0" fill="#cbd7ba"/>
<polygon points="668.0,318.0 676.0,316.0 678.0,324.0 670.0,326.0" fill="#ccd8bb"/>
<polygon points="712.0,322.0 722.0,318.0 726.0,326.0 716.0,330.0" fill="#c8d5b6"/>
<polygon points="726.0,402.0 736.0,400.0 738.0,410.0 728.0,412.0" fill="#c6d4b3"/>
<polygon points="750.0,430.0 764.0,424.0 776.0,440.0 764.0,456.0 752.0,448.0" fill="#c7d5b4"/>
<polygon points="764.0,462.0 776.0,452.0 786.0,462.0 772.0,482.0 762.0,476.0" fill="#c5d3b1"/>
<polygon points="770.0,486.0 782.0,478.0 790.0,486.0 770.0,520.0 758.0,512.0" fill="#c3d2ae"/>
<polygon points="782.0,442.0 790.0,436.0 796.0,444.0 788.0,450.0" fill="#cad7b8"/>
<polygon points="660.0,480.0 668.0,476.0 672.0,486.0 664.0,490.0" fill="#ccd8bb"/>
<polygon points="936.0,480.0 946.0,476.0 948.0,488.0 938.0,490.0" fill="#cfdabd"/>
<polygon points="796.0,330.0 803.0,328.0 805.0,336.0 798.0,338.0" fill="#cfdcc0"/>
<polygon points="836.0,272.0 846.0,270.0 848.0,278.0 838.0,280.0" fill="#cddabc"/>
</g>
<polygon points="636.0,512.0 647.0,503.0 659.0,514.0 648.0,527.0 637.0,524.0" fill="#dee3ad"/>
<polygon points="916.7,313.0 921.2,312.3 931.2,315.6 941.2,329.0 950.7,339.0 950.7,362.0 940.0,366.0 930.0,352.0 922.0,335.0" fill="#d9dec3"/>
<polygon points="747.5,167.5 755.0,177.5 765.0,180.0 775.0,187.6 772.6,197.6 782.6,197.6 794.0,202.6 797.7,210.0 807.7,211.4 815.3,222.7 832.8,231.5 845.4,240.3 855.4,251.6 865.4,252.8 873.0,262.8 890.5,260.3 895.5,270.4 907.7,271.0 910.7,282.0 921.7,294.0 914.7,304.0 916.7,313.0 921.2,312.3 931.2,315.6 941.2,329.0 950.7,339.0 950.7,167.5" fill="#9cb3cd"/>
<polygon points="938.0,367.0 950.7,362.0 950.7,391.0 944.0,386.0 940.0,376.0" fill="#9cb3cd"/>
<rect x="912.6" y="331" width="2.2" height="7" fill="#8fb3dc"/>
<rect x="912.6" y="340" width="2.2" height="7" fill="#8fb3dc"/>
<rect x="912.6" y="349" width="2.2" height="7" fill="#8fb3dc"/>
<rect x="912.6" y="358" width="2.2" height="7" fill="#8fb3dc"/>
<g fill="#dce3cb"><circle cx="755.5" cy="179.1" r="2.1"/><circle cx="753.9" cy="176.7" r="2.2"/><circle cx="753.0" cy="178.8" r="2.2"/><circle cx="764.9" cy="179.2" r="1.5"/><circle cx="764.0" cy="179.8" r="1.8"/><circle cx="765.2" cy="182.0" r="2.2"/><circle cx="775.5" cy="189.6" r="1.5"/><circle cx="773.6" cy="188.1" r="1.3"/><circle cx="773.1" cy="187.7" r="1.8"/><circle cx="774.3" cy="198.1" r="1.8"/><circle cx="772.6" cy="196.6" r="1.2"/><circle cx="771.4" cy="198.4" r="1.4"/><circle cx="782.1" cy="195.6" r="2.2"/><circle cx="781.2" cy="196.7" r="2.3"/><circle cx="782.6" cy="199.0" r="2.0"/><circle cx="795.0" cy="201.0" r="1.8"/><circle cx="794.0" cy="204.1" r="1.6"/><circle cx="794.4" cy="200.8" r="1.7"/><circle cx="797.0" cy="208.6" r="2.2"/><circle cx="797.2" cy="211.9" r="1.9"/><circle cx="798.1" cy="210.6" r="2.0"/><circle cx="806.3" cy="211.2" r="1.5"/><circle cx="807.3" cy="209.8" r="2.4"/><circle cx="806.6" cy="212.1" r="1.6"/><circle cx="816.8" cy="223.3" r="1.4"/><circle cx="816.7" cy="224.5" r="2.3"/><circle cx="815.6" cy="221.3" r="1.4"/><circle cx="834.5" cy="231.7" r="1.4"/><circle cx="834.3" cy="232.1" r="1.9"/><circle cx="832.3" cy="231.1" r="1.5"/><circle cx="843.6" cy="241.8" r="1.8"/><circle cx="845.6" cy="239.6" r="2.1"/><circle cx="843.5" cy="239.8" r="1.2"/><circle cx="853.9" cy="253.5" r="2.0"/><circle cx="855.1" cy="251.7" r="2.2"/><circle cx="854.8" cy="252.0" r="2.0"/><circle cx="864.8" cy="252.9" r="2.1"/><circle cx="867.0" cy="251.4" r="2.3"/><circle cx="863.4" cy="253.8" r="2.2"/><circle cx="871.5" cy="262.5" r="2.2"/><circle cx="871.1" cy="263.3" r="2.2"/><circle cx="873.1" cy="263.7" r="1.5"/><circle cx="889.3" cy="259.8" r="1.4"/><circle cx="889.9" cy="262.1" r="1.9"/><circle cx="889.9" cy="259.4" r="2.3"/><circle cx="895.3" cy="272.3" r="1.8"/><circle cx="895.6" cy="272.0" r="2.1"/><circle cx="895.8" cy="270.1" r="2.3"/><circle cx="907.3" cy="272.7" r="1.3"/><circle cx="907.4" cy="271.1" r="2.3"/><circle cx="906.7" cy="272.2" r="2.0"/><circle cx="911.6" cy="282.5" r="2.4"/><circle cx="910.0" cy="281.6" r="1.4"/><circle cx="908.9" cy="280.9" r="2.3"/><circle cx="923.1" cy="292.4" r="1.9"/><circle cx="921.6" cy="294.4" r="2.0"/><circle cx="920.9" cy="295.8" r="1.8"/><circle cx="915.2" cy="304.5" r="1.4"/><circle cx="912.9" cy="303.6" r="2.1"/><circle cx="916.0" cy="304.9" r="1.3"/></g>
<path d="M804.0 452.0 L818.0 441.0 L832.5 436.0 L852.5 437.8 L874.2 436.0 L899.6 432.4 L917.7 412.5 L928.6 398.0 L932.2 380.0" fill="none" stroke="#8fb8d4" stroke-width="1" stroke-dasharray="1.6 1.1"/>
<g fill="none" stroke="#909090" stroke-width=".8" stroke-linejoin="round"><path d="M650.0 395.0 L700.0 388.0 L760.0 378.0 L820.0 364.0 L890.0 350.0"/><path d="M690.0 300.0 L740.0 330.0 L790.0 352.0 L860.0 356.0 L900.0 352.0"/><path d="M706.0 217.0 L740.0 262.0 L790.0 310.0 L830.0 340.0 L880.0 345.0"/><path d="M697.0 222.0 L720.0 275.0 L745.0 330.0 L765.0 385.0"/><path d="M680.0 265.0 L730.0 290.0 L780.0 305.0 L850.0 318.0 L892.0 322.0"/><path d="M665.0 305.0 L720.0 340.0 L770.0 380.0 L800.0 400.0 L850.0 437.0"/><path d="M650.0 342.0 L700.0 350.0 L760.0 372.0"/><path d="M760.0 200.0 L775.0 240.0 L790.0 290.0 L800.0 340.0 L806.0 380.0"/><path d="M735.0 200.0 L750.0 250.0 L768.0 300.0 L780.0 350.0 L790.0 392.0"/><path d="M830.0 245.0 L838.0 290.0 L842.0 340.0 L846.0 372.0"/><path d="M860.0 268.0 L862.0 300.0 L864.0 340.0 L866.0 370.0"/><path d="M862.0 371.0 L866.0 400.0 L872.0 436.0"/><path d="M811.0 380.0 L820.0 410.0 L832.0 436.0"/><path d="M775.0 393.0 L790.0 420.0 L804.0 452.0"/><path d="M660.0 432.0 L700.0 425.0 L741.0 443.0"/><path d="M689.0 463.0 L715.0 450.0 L741.0 443.0"/><path d="M670.0 400.0 L690.0 440.0 L715.0 488.0"/><path d="M715.0 406.0 L730.0 450.0 L727.0 481.0"/><path d="M783.0 262.0 L800.0 272.0 L830.0 300.0 L860.0 330.0"/><path d="M720.0 232.0 L760.0 262.0 L800.0 262.0 L830.0 260.0"/><path d="M636.0 215.0 L670.0 240.0 L697.0 222.0"/><path d="M636.0 290.0 L665.0 300.0 L680.0 265.0"/><path d="M655.0 168.0 L670.0 200.0 L690.0 240.0 L697.0 222.0"/><path d="M700.0 168.0 L720.0 200.0 L740.0 198.0"/><path d="M636.0 250.0 L660.0 262.0 L680.0 265.0"/><path d="M636.0 440.0 L670.0 438.0"/><path d="M636.0 480.0 L680.0 500.0 L720.0 531.0"/><path d="M660.0 531.0 L690.0 500.0 L715.0 488.0"/><path d="M636.0 420.0 L651.0 414.0"/><path d="M800.0 531.0 L820.0 490.0 L850.0 450.0 L874.0 436.0"/><path d="M840.0 531.0 L870.0 480.0 L900.0 432.0"/><path d="M880.0 531.0 L905.0 480.0 L918.0 412.0"/><path d="M790.0 500.0 L830.0 510.0 L880.0 500.0 L950.0 470.0"/><path d="M810.0 470.0 L860.0 480.0 L914.0 452.0"/><path d="M920.0 531.0 L935.0 500.0 L950.7 480.0"/></g>
<path d="M755.5 193.4 L748.0 195.0 L740.4 198.5 L706.3 216.9 L697.0 222.6 L680.2 265.4 L650.0 342.4 L646.6 361.8 L648.6 387.1 L650.7 414.6 L660.8 431.9 L689.7 463.6 L715.6 488.1 L732.9 504.0 L753.0 521.2 L764.6 531.0" fill="none" stroke="#707070" stroke-width="1.6" stroke-linejoin="round" stroke-linecap="round"/>
<path d="M676.9 167.5 L690.0 190.0 L706.3 216.9" fill="none" stroke="#6a6a6a" stroke-width="2.0" stroke-linejoin="round" stroke-linecap="round"/>
<path d="M755.5 193.4 L758.8 193.9 L766.0 197.5 L777.6 206.4 L802.7 224.0 L827.8 242.8 L852.9 260.3 L870.5 272.9 L883.0 282.9" fill="none" stroke="#6a6a6a" stroke-width="1.8" stroke-linejoin="round" stroke-linecap="round"/>
<path d="M883.0 282.9 L889.4 293.9 L886.5 315.6 L887.7 345.7 L889.2 365.4 L898.3 401.6 L907.4 430.6 L914.0 452.0 L930.0 478.0 L950.7 500.0" fill="none" stroke="#747474" stroke-width="1.3" stroke-linejoin="round" stroke-linecap="round"/>
<path d="M636.0 387.2 L649.3 390.0 L666.6 393.0 L689.7 391.5 L704.0 397.3 L715.6 406.0 L732.9 413.2 L753.0 414.6" fill="none" stroke="#747474" stroke-width="1.3" stroke-linejoin="round" stroke-linecap="round"/>
<path d="M753.0 414.6 L760.5 401.6 L775.0 392.6 L811.3 379.9 L862.1 370.8 L891.1 365.4 L905.6 361.8 L918.0 352.0 L924.0 338.0" fill="none" stroke="#707070" stroke-width="1.4" stroke-linejoin="round" stroke-linecap="round"/>
<path d="M753.0 414.6 L741.5 443.4 L727.0 480.9 L715.6 495.3 L704.0 512.6 L694.0 531.0" fill="none" stroke="#707070" stroke-width="1.5" stroke-linejoin="round" stroke-linecap="round"/>
<path d="M753.0 414.6 L770.0 438.0 L785.9 456.0 L800.4 463.3 L812.0 470.0" fill="none" stroke="#7a7a7a" stroke-width="1.2" stroke-linejoin="round" stroke-linecap="round"/>
<path d="M804.0 456.0 L786.0 490.0 L767.8 521.3 L762.0 531.0" fill="none" stroke="#808080" stroke-width="1.1" stroke-linejoin="round" stroke-linecap="round"/>
<path d="M924.0 338.0 L931.0 354.5 L938.0 385.0 L945.4 412.5 L950.7 446.0" fill="none" stroke="#6b6b6b" stroke-width="1.6" stroke-linejoin="round" stroke-linecap="round"/>
<path d="M636.0 372.0 L646.0 372.0 L649.0 387.0" fill="none" stroke="#7a7a7a" stroke-width="1.2" stroke-linejoin="round" stroke-linecap="round"/>
</g>
<g fill="none" stroke-linecap="round" stroke-width="1.4" filter="url(#bl2)">
<path d="M840.7 293.6h0M815.0 282.7h0M781.1 254.5h0M821.1 279.9h0M791.0 290.4h0M813.9 285.9h0M769.4 213.9h0M801.6 274.9h0M842.7 284.4h0M808.7 294.9h0M763.8 210.5h0M852.4 284.7h0M836.9 288.9h0M778.0 253.9h0M806.4 310.5h0M841.2 293.0h0M782.7 246.6h0M838.4 288.6h0M874.3 302.4h0M796.3 302.0h0M857.2 294.2h0M784.8 347.4h0M780.9 278.2h0M853.8 292.7h0M771.2 224.2h0M795.4 255.0h0M857.0 293.3h0M727.3 342.9h0M785.1 226.5h0M806.7 284.2h0M782.8 252.8h0M826.4 345.4h0M843.6 295.3h0M807.5 289.1h0M752.3 290.1h0M816.9 279.7h0M783.6 307.9h0M880.2 306.0h0M768.6 229.7h0M813.7 256.3h0M883.7 289.2h0M875.1 317.8h0M793.1 241.2h0M747.6 198.6h0M805.9 272.9h0M854.6 292.6h0M815.0 299.3h0M824.8 294.3h0M789.4 247.1h0M781.7 296.0h0M802.9 365.0h0M769.0 210.6h0M764.6 275.0h0M849.8 277.6h0M779.7 273.7h0M754.3 281.3h0M850.6 285.2h0M809.3 262.2h0M749.1 251.3h0M789.9 304.3h0M785.8 253.8h0M872.8 298.2h0M802.1 356.0h0M841.8 283.7h0M792.7 262.6h0M782.9 301.1h0M850.8 279.0h0M830.7 318.2h0M800.7 379.2h0M795.1 272.4h0M832.4 310.1h0M801.0 304.6h0M832.3 281.3h0M820.6 308.2h0M804.6 259.0h0M829.4 310.9h0M796.0 262.6h0M762.8 226.4h0M761.1 276.1h0M833.0 298.2h0M870.4 303.4h0M771.1 223.8h0M845.9 291.9h0M762.7 276.4h0M853.0 293.2h0M771.5 214.4h0M800.8 273.2h0M778.7 271.5h0M821.2 269.0h0M783.4 309.3h0M821.5 267.9h0M795.3 256.8h0M807.7 346.3h0M751.2 215.4h0M776.0 253.4h0M800.5 304.4h0M903.4 317.4h0M785.5 227.6h0M803.0 247.0h0M767.9 285.8h0M794.3 369.0h0M852.5 293.0h0M781.7 226.9h0M823.3 285.2h0M819.8 278.7h0M829.9 294.0h0M884.1 285.0h0M787.6 360.7h0M782.8 232.7h0M808.0 266.0h0M792.1 296.5h0M879.5 322.6h0M830.8 281.9h0M789.7 244.4h0M766.2 327.7h0M777.0 318.0h0M749.1 239.5h0M732.7 287.6h0M868.2 310.4h0M760.4 256.1h0M822.2 284.2h0M827.1 278.9h0M879.3 308.8h0M876.7 295.2h0M748.5 246.9h0M806.9 267.1h0M790.2 253.9h0M797.7 288.9h0M839.0 286.4h0M801.0 262.8h0M841.4 288.4h0M844.3 283.0h0M876.2 291.7h0M870.6 294.2h0M789.2 348.0h0M739.3 277.3h0M763.2 237.7h0M723.5 281.6h0M734.9 211.2h0M845.8 283.1h0M783.7 234.7h0M735.9 212.2h0M834.8 278.1h0M875.1 303.1h0M856.9 319.3h0M786.7 244.0h0M862.6 300.9h0M790.0 234.7h0" stroke="#f0f921" opacity="0.68"/>
<path d="M810.8 292.2h0M815.0 265.8h0M862.9 304.8h0M789.8 246.4h0M888.3 312.2h0M903.6 310.9h0M729.0 324.8h0M789.2 256.4h0M798.6 312.1h0M784.6 285.7h0M824.8 304.7h0M790.4 261.6h0M783.1 307.9h0M862.0 355.6h0M867.8 283.9h0M782.3 310.2h0M852.4 290.7h0M807.1 265.5h0M799.3 278.7h0M784.4 294.6h0M815.0 280.6h0M834.0 271.5h0M833.1 278.1h0M766.9 286.9h0M705.4 330.8h0M710.7 237.6h0M860.0 280.4h0M819.9 273.0h0M802.9 296.6h0M808.9 307.2h0M814.9 259.2h0M860.2 302.1h0M807.8 292.6h0M756.5 195.1h0M802.3 337.9h0M834.1 294.1h0M772.9 266.0h0M768.5 248.9h0M755.9 205.1h0M779.4 234.9h0M763.5 258.8h0M746.9 254.7h0M753.8 199.8h0M753.0 249.9h0M760.6 265.6h0M731.6 214.2h0M861.6 286.1h0M742.5 237.6h0M825.3 287.7h0M759.8 289.2h0M891.6 305.6h0M795.3 261.5h0M753.2 238.0h0M803.5 280.0h0M755.4 214.4h0M758.4 328.8h0M790.6 365.5h0M871.7 303.8h0M792.6 315.8h0M879.7 294.6h0M838.6 283.0h0M783.0 266.3h0M748.7 240.8h0M764.9 219.9h0M757.2 319.8h0M768.8 222.0h0M774.2 357.7h0M815.6 319.0h0M776.3 242.4h0M885.5 355.8h0M746.7 250.4h0M770.7 337.5h0M817.2 282.0h0M820.5 298.0h0M868.3 286.9h0M849.6 316.7h0M781.0 382.3h0M731.8 212.5h0M791.1 270.6h0M788.7 366.4h0M815.2 277.1h0M741.2 320.1h0M790.4 387.4h0M828.7 287.3h0M802.0 260.9h0M715.9 311.8h0M828.8 303.9h0M863.5 287.3h0M721.5 268.8h0M866.2 308.7h0M795.4 271.5h0M880.8 320.8h0M783.1 256.1h0M809.1 298.9h0M763.8 223.8h0M691.5 329.7h0M829.1 315.7h0M768.1 199.4h0M742.4 310.0h0M736.0 295.2h0M814.7 316.9h0M737.4 226.1h0M736.3 295.1h0M777.5 257.0h0M804.2 285.5h0M827.4 325.1h0M796.0 300.7h0M883.9 308.3h0M752.0 207.4h0M906.9 351.3h0M738.7 257.6h0M772.3 276.9h0M775.9 224.8h0M826.5 325.3h0M721.1 330.7h0M863.5 309.8h0M862.9 310.3h0M784.7 251.1h0M733.7 264.3h0M750.5 210.7h0M816.6 320.6h0M738.4 224.9h0M846.1 349.5h0M730.8 327.9h0M864.5 306.8h0M854.7 346.8h0M761.0 228.0h0M807.3 262.5h0M854.4 297.7h0M778.5 263.0h0M802.0 319.5h0M879.6 346.0h0M787.8 299.4h0M732.5 254.1h0M810.7 356.2h0M822.2 267.0h0M824.2 263.6h0M868.0 292.1h0M904.8 307.0h0M803.7 252.9h0M768.8 200.4h0M816.8 264.3h0M860.2 317.5h0M785.1 279.5h0M665.5 329.1h0M750.8 199.1h0M726.7 321.1h0M785.3 316.1h0M776.1 245.9h0M827.9 296.3h0M752.3 346.7h0M813.4 309.1h0M798.6 326.6h0M774.3 230.1h0M747.5 233.9h0M778.0 331.8h0M791.0 236.1h0M764.5 212.6h0M757.8 307.8h0M752.8 257.8h0M720.7 383.2h0M752.6 229.4h0M763.0 263.4h0M838.5 310.6h0M754.5 328.5h0M826.9 286.3h0M815.5 307.2h0M798.6 364.7h0M756.6 234.4h0M838.1 308.9h0M824.5 261.2h0" stroke="#fcce25" opacity="0.68"/>
<path d="M846.0 322.1h0M722.9 272.6h0M815.5 308.9h0M883.1 299.8h0M688.5 320.8h0M905.2 330.0h0M781.3 281.8h0M785.1 226.1h0M803.0 264.5h0M885.5 289.9h0M665.9 313.3h0M836.1 281.8h0M720.4 231.9h0M781.6 271.1h0M892.8 290.1h0M776.8 247.2h0M801.9 260.6h0M845.3 281.3h0M760.7 221.3h0M745.4 212.4h0M696.0 290.1h0M888.8 351.1h0M848.5 337.0h0M807.0 293.3h0M763.6 349.1h0M789.2 339.4h0M878.4 319.1h0M779.4 284.3h0M788.5 316.0h0M660.8 318.0h0M889.2 313.5h0M744.3 315.5h0M782.5 232.8h0M843.3 324.8h0M871.5 312.9h0M741.5 239.0h0M696.8 324.6h0M728.8 237.8h0M790.7 306.9h0M793.2 368.1h0M741.1 292.7h0M894.3 334.3h0M760.7 250.9h0M825.1 321.3h0M704.5 363.3h0M841.5 299.4h0M895.5 321.5h0M739.1 213.2h0M773.5 289.2h0M746.3 305.1h0M846.4 314.0h0M771.7 230.9h0M769.3 262.0h0M823.0 287.6h0M870.3 293.5h0M756.7 262.7h0M795.9 296.8h0M773.7 335.9h0M763.6 350.0h0M763.1 394.9h0M780.3 300.5h0M872.5 306.4h0M688.5 273.0h0M859.3 349.6h0M721.9 282.1h0M776.9 297.8h0M759.7 393.4h0M836.6 318.8h0M761.8 321.4h0M871.5 328.8h0M754.7 235.6h0M766.3 281.0h0M770.5 245.2h0M874.1 307.5h0M703.4 229.7h0M816.5 339.6h0M778.6 355.1h0M746.7 276.6h0M834.0 273.6h0M802.9 278.5h0M697.9 267.9h0M725.5 329.1h0M846.3 282.8h0M881.5 328.9h0M904.4 308.7h0M754.1 348.3h0M761.6 217.3h0M755.1 340.0h0M823.0 324.0h0M677.5 318.2h0M789.9 330.0h0M849.6 321.4h0M776.4 276.8h0M813.3 332.7h0M754.9 239.7h0M709.6 393.3h0M774.1 325.7h0M794.2 266.0h0M757.5 235.7h0M711.1 355.9h0M784.7 260.1h0M698.5 292.3h0M780.2 285.5h0M858.7 302.4h0M867.4 309.1h0M750.4 233.5h0M793.3 371.9h0M845.6 318.5h0M832.1 327.3h0M798.3 338.2h0M823.9 270.8h0M764.9 241.5h0M724.2 322.0h0M843.3 305.3h0M769.3 293.6h0M765.7 397.0h0M804.3 376.5h0M654.0 359.5h0M825.7 359.0h0M685.7 316.9h0M824.0 275.9h0M747.6 257.6h0M737.0 307.4h0M815.6 318.2h0M702.0 224.6h0M723.6 375.8h0M744.5 319.2h0M736.0 209.6h0M823.6 311.8h0M840.9 350.5h0M851.4 290.8h0M850.9 302.2h0M882.8 326.5h0M864.7 351.2h0M774.9 260.8h0M785.8 288.9h0M880.6 318.2h0M770.6 252.9h0M768.7 234.6h0M907.9 326.8h0M711.2 241.4h0M822.1 318.0h0M880.0 323.1h0M899.4 317.8h0M787.3 373.4h0M816.4 268.0h0M765.3 300.4h0M891.3 312.6h0M815.5 316.2h0M788.2 229.7h0M744.7 272.4h0M844.9 305.6h0M846.6 285.5h0M876.7 341.5h0M748.4 253.4h0M713.1 345.5h0M766.7 214.6h0M738.8 303.0h0M886.1 309.8h0M815.7 347.7h0M760.5 269.8h0M763.4 305.7h0M732.5 341.4h0M785.1 330.3h0M754.6 324.1h0M781.2 281.7h0M901.9 302.9h0M907.2 353.3h0M829.9 323.6h0M782.9 361.2h0M767.6 334.0h0M718.0 251.1h0M774.4 275.5h0M731.6 319.7h0M761.6 223.4h0M809.0 324.4h0M732.3 283.6h0M763.7 226.3h0M785.8 268.2h0M735.3 221.3h0M895.8 291.7h0M823.5 321.7h0M926.5 356.9h0M762.5 230.2h0M808.5 274.2h0M804.9 252.8h0M781.6 234.2h0M685.3 310.1h0M787.1 277.7h0M792.4 320.5h0M741.5 318.4h0M843.1 350.6h0M734.4 330.1h0M778.2 292.1h0M756.1 352.7h0M723.1 265.1h0M763.9 217.3h0M752.8 299.3h0M714.5 309.8h0M711.4 296.0h0M744.2 273.3h0M744.2 226.4h0M825.5 312.1h0M818.9 274.8h0M809.8 324.1h0M782.1 239.8h0M676.0 372.1h0M818.9 273.8h0M709.6 348.7h0M765.7 321.6h0M886.9 338.6h0M728.8 302.3h0M665.9 318.4h0M756.0 217.4h0M772.9 287.6h0M730.2 309.8h0M796.2 351.0h0M829.7 302.0h0M875.5 319.3h0M702.7 283.6h0M848.4 312.8h0M886.0 311.8h0M849.4 307.1h0M688.8 302.1h0M806.1 362.9h0M786.3 348.3h0M896.2 302.4h0M738.8 200.1h0M889.7 331.3h0M748.6 206.1h0M769.2 332.5h0M728.1 206.8h0M805.2 331.4h0M711.9 297.5h0M732.9 343.5h0M742.9 335.3h0M763.0 347.2h0M749.8 253.0h0M862.2 324.6h0M914.1 333.0h0M859.1 313.7h0M880.8 315.0h0" stroke="#fca636" opacity="0.68"/>
<path d="M788.5 232.0h0M859.9 339.3h0M678.4 348.5h0M850.1 352.1h0M753.9 337.6h0M786.0 269.9h0M894.9 306.2h0M864.4 364.9h0M792.7 366.6h0M795.3 296.6h0M891.5 336.6h0M793.9 263.0h0M766.0 383.8h0M805.0 312.8h0M776.3 285.0h0M739.6 365.1h0M751.8 334.2h0M704.2 299.6h0M840.8 328.1h0M817.4 348.6h0M760.1 195.5h0M765.7 340.2h0M731.6 247.1h0M866.8 320.9h0M677.1 276.1h0M803.1 286.2h0M770.3 233.4h0M732.3 345.5h0M913.3 352.5h0M697.7 386.2h0M714.5 378.9h0M787.6 296.4h0M665.0 321.8h0M746.7 227.4h0M781.7 316.4h0M716.4 258.7h0M705.4 379.9h0M779.7 339.0h0M787.6 291.9h0M735.5 233.5h0M730.4 286.0h0M878.5 294.0h0M713.2 283.3h0M849.2 317.0h0M740.8 316.5h0M740.5 247.7h0M724.9 304.1h0M847.2 317.4h0M781.7 331.4h0M731.6 352.2h0M739.3 277.4h0M781.9 369.2h0M755.2 274.3h0M900.8 339.4h0M753.3 261.5h0M764.8 247.2h0M762.3 331.2h0M690.5 266.1h0M883.1 355.5h0M826.7 356.8h0M809.5 357.3h0M748.7 343.9h0M781.5 279.3h0M804.1 296.9h0M846.1 358.4h0M824.1 306.6h0M824.3 348.8h0M663.5 381.6h0M736.4 265.9h0M739.7 257.2h0M733.2 229.4h0M886.0 310.8h0M674.9 329.3h0M717.6 232.8h0M805.0 383.0h0M894.0 333.2h0M799.5 339.0h0M785.4 226.4h0M908.3 325.5h0M845.4 315.9h0M753.1 243.6h0M829.8 312.3h0M711.2 227.4h0M716.4 231.1h0M664.2 325.1h0M773.2 396.3h0M854.2 357.2h0M853.0 342.4h0M832.9 322.0h0M768.8 312.2h0M746.6 245.6h0M781.7 308.0h0M756.1 208.6h0M745.0 274.3h0M850.7 311.2h0M753.4 333.4h0M861.2 349.5h0M783.0 328.3h0M790.6 297.6h0M887.3 347.5h0M872.0 345.1h0M806.7 383.1h0M739.4 264.1h0M705.0 252.2h0M790.5 330.1h0M802.4 383.9h0M744.6 345.1h0M744.8 225.4h0M769.3 375.8h0M747.7 303.9h0M698.0 235.2h0M882.1 343.3h0M770.0 252.8h0M732.3 260.4h0M708.1 342.4h0M855.4 337.6h0M800.4 356.1h0M654.2 394.6h0M729.6 305.8h0M878.0 356.0h0M799.1 323.3h0M684.2 293.2h0M785.2 298.4h0M737.9 320.3h0M912.4 359.1h0M672.0 369.8h0M785.6 384.9h0M786.7 282.3h0M686.2 286.8h0M757.2 398.2h0M729.8 234.9h0M781.9 291.0h0M760.0 220.6h0M834.5 306.4h0M881.2 309.4h0M835.1 361.2h0M763.1 260.4h0M736.8 233.5h0M745.1 284.1h0M766.4 214.6h0M832.4 337.9h0M867.2 330.5h0M734.4 239.5h0M781.1 310.0h0M660.8 315.0h0M802.9 386.5h0M677.1 371.5h0M700.9 333.4h0M865.3 315.2h0M910.2 338.3h0M856.0 283.0h0M876.3 288.3h0M818.1 309.2h0M706.7 307.0h0M796.7 419.7h0M862.4 311.9h0M805.3 337.4h0M809.0 358.2h0M744.7 207.0h0M696.6 277.5h0M780.1 301.2h0M903.2 312.2h0M765.9 240.1h0M787.7 366.8h0M672.7 343.3h0M753.5 330.4h0M776.6 250.1h0M772.4 274.2h0M709.5 258.2h0M677.9 341.6h0M765.4 327.6h0M766.1 233.0h0M851.2 355.1h0M788.4 322.4h0M776.3 344.8h0M721.1 411.9h0M781.8 366.3h0M842.8 372.7h0M787.0 355.0h0M764.0 355.8h0M904.0 318.0h0M649.8 400.8h0M791.1 337.4h0M686.9 303.0h0M751.3 386.8h0M794.4 339.6h0M783.9 324.4h0M701.2 362.3h0M718.3 298.7h0M738.8 280.6h0M725.4 292.8h0M760.0 251.2h0M759.0 201.7h0M724.4 289.9h0M738.2 369.8h0M883.9 335.0h0M835.5 319.7h0M726.7 288.8h0M749.3 297.7h0M724.1 348.0h0M703.2 309.1h0M725.5 281.2h0M771.6 275.0h0M707.7 285.1h0M898.3 296.3h0M733.9 266.1h0M765.2 265.3h0M803.9 337.3h0M796.2 329.3h0M865.1 355.4h0M797.3 287.4h0M879.7 287.5h0M766.3 402.2h0M816.9 334.0h0M804.4 346.8h0M663.5 316.0h0M756.6 231.6h0M784.5 383.9h0M706.0 221.9h0M757.8 234.0h0M719.4 366.2h0M817.9 360.1h0M849.7 321.3h0M885.6 312.9h0M749.2 372.6h0M766.7 377.5h0M786.3 269.5h0M692.4 325.4h0M714.5 364.4h0M753.8 219.6h0M728.8 280.4h0M855.7 356.8h0M741.9 259.4h0M748.2 310.4h0M848.5 300.3h0M726.1 394.2h0M712.3 266.9h0M746.5 276.7h0M750.3 284.2h0M682.9 303.8h0M725.0 296.4h0M786.4 388.0h0M864.6 339.8h0M883.4 326.1h0M776.8 244.8h0M739.3 364.8h0M802.6 292.2h0M661.2 390.9h0M757.9 287.3h0M809.9 301.5h0M790.8 332.7h0M735.8 351.7h0M776.1 224.1h0M731.0 329.0h0M793.9 330.7h0M808.4 312.1h0M681.7 387.0h0M864.4 348.5h0M776.1 370.7h0M845.5 358.3h0M793.5 311.5h0M780.1 287.5h0M730.8 313.7h0M843.7 315.1h0M712.8 214.1h0M739.5 242.1h0M711.7 335.3h0M889.1 323.7h0M846.0 319.2h0M743.1 372.3h0M784.1 239.3h0M790.8 373.2h0M693.1 374.0h0M856.0 288.8h0M719.3 283.8h0M724.9 255.9h0M767.8 295.3h0M897.4 353.7h0M885.1 307.1h0M750.8 306.3h0M766.2 392.9h0M880.1 355.4h0M715.1 310.3h0M841.3 327.9h0M893.8 305.5h0M827.5 302.3h0M746.9 314.8h0M894.2 322.4h0M821.2 326.5h0M853.8 358.2h0M861.5 364.9h0M671.6 337.0h0M706.1 323.1h0M763.2 370.4h0M809.5 363.5h0M718.7 221.9h0M716.8 330.0h0M728.9 205.2h0M894.2 322.5h0M844.0 283.9h0M660.8 325.1h0M799.4 289.3h0M747.8 222.5h0M659.9 410.0h0M759.8 204.4h0M799.2 279.9h0M746.3 239.3h0M777.8 242.7h0M922.2 348.6h0M869.0 367.0h0M852.1 361.6h0M814.6 346.1h0M785.0 282.8h0M719.8 302.6h0M859.6 326.2h0M669.1 302.3h0M751.7 217.3h0M711.5 290.3h0M814.9 289.0h0M791.4 374.3h0M724.4 403.6h0M766.8 348.5h0M767.1 233.2h0M786.7 322.2h0M782.5 331.1h0M687.6 260.2h0M669.6 334.0h0M899.9 339.4h0M761.0 304.3h0M695.5 355.5h0M800.3 282.0h0M732.4 205.8h0M816.5 358.5h0M732.3 315.2h0M761.8 309.5h0M664.5 318.2h0M779.7 325.8h0M759.2 284.4h0M658.0 331.2h0M745.4 280.7h0M691.0 342.1h0M786.1 254.2h0M921.2 359.7h0M870.6 321.2h0M854.8 348.6h0M693.5 272.5h0M792.8 251.3h0M709.9 244.0h0M799.7 342.9h0M845.6 361.1h0M674.9 348.3h0M730.7 231.1h0M838.5 284.8h0M730.4 294.5h0M920.3 406.2h0M724.0 272.0h0M705.3 331.2h0M722.8 227.3h0M926.0 363.7h0M916.3 339.3h0M880.9 345.0h0M873.5 307.4h0M828.4 348.9h0M905.3 313.3h0M746.7 401.7h0M711.6 322.6h0M742.0 209.1h0M684.3 331.9h0M721.1 310.6h0M852.1 303.5h0M732.8 375.7h0M690.7 306.5h0M693.6 323.4h0M759.7 207.4h0M728.7 357.2h0M800.6 364.3h0M819.0 341.5h0M693.7 267.5h0M763.8 368.9h0M758.3 206.4h0M764.6 317.4h0M810.7 394.6h0M745.1 250.3h0M717.0 401.7h0M778.0 251.3h0M732.3 241.4h0M685.8 297.6h0M782.9 336.9h0M713.2 363.2h0M838.5 312.4h0M658.9 392.6h0M807.3 286.2h0M803.3 374.9h0M769.8 389.4h0M721.8 280.5h0M806.0 341.2h0M850.6 312.9h0M725.9 323.8h0M777.0 258.6h0M729.9 346.9h0M827.9 263.5h0M887.7 337.3h0M689.9 251.6h0" stroke="#f2844b" opacity="0.68"/>
<path d="M893.7 342.8h0M709.0 284.8h0M699.7 303.6h0M872.0 344.3h0M725.7 232.9h0M814.8 298.5h0M755.1 364.2h0M778.2 348.5h0M777.7 330.9h0M704.9 321.6h0M739.7 254.6h0M696.3 258.3h0M751.9 302.9h0M763.3 317.4h0M774.1 328.4h0M711.0 289.5h0M744.7 329.9h0M862.2 350.2h0M749.4 322.9h0M898.8 323.5h0M670.7 442.2h0M801.8 351.7h0M672.7 371.3h0M726.8 396.9h0M776.1 374.8h0M909.9 363.5h0M652.4 383.0h0M746.0 250.7h0M758.5 371.9h0M792.6 390.9h0M778.6 361.9h0M712.7 265.2h0M766.5 280.4h0M841.4 361.4h0M748.0 218.9h0M726.3 284.1h0M751.9 375.4h0M660.5 366.6h0M897.1 328.1h0M756.5 250.4h0M733.3 260.3h0M682.7 343.1h0M710.7 327.5h0M885.0 349.4h0M732.2 244.5h0M778.5 328.3h0M913.2 361.2h0M716.3 379.9h0M733.4 210.8h0M861.0 325.2h0M687.4 401.5h0M706.5 276.6h0M665.2 313.2h0M805.6 331.3h0M738.6 345.5h0M741.9 321.8h0M844.1 371.8h0M682.2 285.4h0M728.1 281.0h0M722.8 374.2h0M795.9 345.4h0M752.6 324.5h0M897.0 345.6h0M777.3 295.9h0M740.5 336.1h0M726.7 255.5h0M862.1 320.0h0M654.9 396.5h0M900.4 321.5h0M699.3 288.4h0M739.6 280.3h0M758.2 328.4h0M914.8 343.6h0M743.9 350.7h0M748.8 393.8h0M673.2 330.2h0M780.3 360.6h0M689.3 278.3h0M873.4 368.0h0M811.1 340.9h0M892.5 355.7h0M826.6 382.1h0M885.0 338.6h0M700.4 234.1h0M861.3 349.0h0M727.9 322.7h0M756.3 370.8h0M651.8 391.4h0M781.2 409.5h0M737.7 296.4h0M845.3 374.9h0M896.1 330.3h0M915.4 347.3h0M870.2 315.3h0M704.2 376.5h0M833.3 396.9h0M783.7 373.9h0M786.0 396.8h0M885.2 416.6h0M680.2 293.1h0M728.7 326.4h0M897.6 400.5h0M799.0 374.4h0M883.3 330.8h0M877.3 401.6h0M722.8 295.2h0M819.8 313.7h0M714.6 380.5h0M682.3 316.7h0M881.2 352.5h0M715.8 370.1h0M723.3 274.9h0M847.0 344.4h0M701.8 326.1h0M887.5 338.3h0M699.2 329.1h0M785.0 247.8h0M756.1 304.2h0M827.1 334.0h0M697.1 318.8h0M686.4 315.8h0M893.5 334.5h0M735.3 350.1h0M730.2 322.2h0M867.4 347.1h0M760.7 397.1h0M897.0 321.1h0M769.2 383.8h0M758.5 363.0h0M686.0 372.6h0M739.5 203.1h0M739.2 401.0h0M773.3 343.3h0M850.2 391.6h0M677.8 324.4h0M780.6 306.1h0M696.4 384.5h0M721.2 264.8h0M761.2 456.7h0M882.5 311.8h0M691.4 307.3h0M888.6 388.5h0M766.7 380.8h0M789.4 278.3h0M876.1 289.6h0M737.8 380.1h0M834.9 370.6h0M718.4 386.0h0M727.1 356.4h0M715.7 340.8h0M676.4 299.0h0M704.3 266.9h0M721.2 315.5h0M696.0 356.5h0M747.4 297.7h0M871.5 317.4h0M771.7 364.5h0M858.8 357.3h0M843.9 343.9h0M770.9 394.6h0M717.8 247.3h0M850.4 360.8h0M702.5 317.3h0M791.9 331.6h0M685.0 359.4h0M870.9 307.3h0M739.9 263.0h0M693.3 259.1h0M717.0 213.5h0M762.8 336.2h0M728.4 248.3h0M699.9 233.7h0M733.5 208.6h0M743.6 278.3h0M698.3 234.6h0M740.6 354.2h0M738.7 355.2h0M928.8 375.7h0M802.3 369.7h0M890.1 335.8h0M892.4 327.3h0M869.5 324.2h0M782.0 270.1h0M714.5 277.3h0M910.6 347.4h0M676.8 408.7h0M698.5 362.3h0M720.4 379.1h0M662.2 338.4h0M716.2 233.9h0M887.0 339.1h0M779.5 342.9h0M905.2 342.1h0M760.6 347.6h0M833.1 341.9h0M820.8 261.9h0M803.5 384.0h0M845.5 334.3h0M907.1 348.4h0M791.0 368.2h0M835.1 369.5h0M738.5 220.2h0M896.9 294.5h0M663.4 376.2h0M869.4 354.5h0M895.6 329.4h0M713.1 241.2h0M879.7 338.0h0M670.5 351.8h0M797.8 319.4h0M759.9 353.6h0M768.0 384.0h0M875.9 367.7h0M754.2 245.3h0M845.3 353.1h0M824.4 359.2h0M694.5 316.0h0M780.7 279.4h0M724.3 225.2h0M897.4 328.5h0M702.3 383.2h0M749.1 325.2h0M821.1 360.0h0M832.4 350.7h0M755.1 230.2h0M706.5 289.1h0M700.7 261.9h0M823.9 270.0h0M793.5 401.1h0M857.5 282.9h0M830.4 346.6h0M880.0 397.6h0M895.0 326.3h0M730.2 342.9h0M767.3 271.6h0M694.2 232.9h0M715.1 369.9h0M664.6 373.7h0M703.0 308.4h0M881.6 333.2h0M817.1 399.2h0M750.3 293.5h0M905.0 315.1h0M820.0 326.7h0M749.3 304.6h0M867.1 333.1h0M750.9 280.7h0M891.5 421.7h0M723.8 387.9h0M855.6 344.7h0M717.3 335.4h0M722.8 277.2h0M717.1 230.1h0M781.0 376.6h0M760.0 365.6h0M790.5 405.5h0M860.9 345.7h0M713.5 249.3h0M706.3 308.1h0M678.4 277.0h0M721.9 359.9h0M709.7 366.2h0M692.6 285.5h0M690.9 329.2h0M799.3 381.2h0M876.6 350.7h0M774.5 366.4h0M725.5 327.3h0M905.0 327.4h0M661.6 389.7h0M674.6 442.1h0M823.6 308.4h0M832.2 311.0h0M761.6 339.8h0M776.1 380.8h0M756.5 338.8h0M757.5 206.9h0M901.2 368.2h0M797.0 334.9h0M723.0 275.6h0M870.8 347.2h0M708.8 265.9h0M763.3 351.8h0M893.2 342.1h0M887.6 365.1h0M669.0 380.2h0M864.8 303.0h0M731.4 245.5h0M755.5 244.9h0M736.2 207.5h0M765.7 318.1h0M712.8 331.6h0M819.0 265.8h0M760.0 288.4h0M820.5 380.4h0M711.6 244.8h0M709.2 352.8h0M757.5 327.2h0M661.3 345.0h0M848.3 319.3h0M720.9 391.6h0M786.5 343.0h0M707.5 329.8h0M817.6 301.9h0M856.4 350.6h0M899.4 358.6h0M694.6 360.3h0M774.2 239.5h0M822.6 379.7h0M869.4 315.8h0M733.4 207.7h0M779.2 395.6h0M885.3 325.6h0M847.9 352.2h0M839.7 328.2h0M833.2 309.4h0M903.6 361.5h0M758.1 232.3h0M692.9 294.0h0M685.3 304.6h0M759.5 364.6h0M788.3 397.8h0M698.5 267.2h0M894.9 321.4h0M741.0 364.8h0M848.5 378.7h0M856.1 347.5h0M698.1 420.1h0M687.8 363.5h0M700.8 230.8h0M770.1 360.3h0M759.5 305.7h0M758.3 197.8h0M725.8 227.9h0M899.1 338.8h0M718.8 300.7h0M762.5 361.7h0M747.3 370.5h0M816.9 437.7h0M743.0 338.4h0M878.6 288.7h0M678.8 312.9h0M661.7 322.5h0M856.7 353.7h0M809.9 333.1h0M879.7 338.7h0M720.8 293.2h0M728.3 312.2h0M826.6 337.7h0M691.1 298.5h0M828.2 344.8h0M744.7 322.1h0M702.6 321.6h0M797.0 326.8h0M724.2 284.3h0M847.1 370.2h0M778.4 309.5h0M694.6 315.7h0M720.4 315.0h0M720.9 392.7h0M789.9 388.9h0M652.2 376.9h0M696.9 256.7h0M793.0 456.7h0M755.7 242.8h0M907.8 333.4h0M676.6 280.8h0M793.4 365.8h0M850.4 313.6h0M732.6 331.5h0M708.8 265.9h0M696.8 361.1h0M857.5 355.2h0M780.9 331.1h0M901.3 320.2h0M709.1 415.0h0M674.2 289.1h0M747.5 315.1h0M925.2 401.1h0M873.1 373.1h0M757.4 205.2h0M695.2 319.4h0M711.1 373.4h0M739.5 272.2h0M858.0 358.4h0M682.6 283.5h0M796.1 391.6h0M888.3 332.0h0M731.8 390.9h0M745.9 220.5h0M686.6 314.9h0M854.6 303.7h0M756.7 333.7h0M906.0 368.5h0M703.2 426.7h0M780.7 386.2h0M844.3 376.1h0M683.7 321.0h0M777.2 328.3h0M730.7 214.8h0M807.6 405.6h0M695.1 261.2h0M726.6 304.4h0M920.2 350.4h0M813.1 388.7h0M714.5 394.4h0M809.0 339.3h0M904.7 348.8h0M717.1 260.9h0M869.7 406.8h0M883.9 347.6h0M753.7 324.8h0M747.7 356.2h0M720.8 230.0h0M874.0 342.4h0M700.1 393.3h0M790.9 318.1h0M870.2 355.2h0M879.0 337.0h0M756.8 261.5h0M710.3 378.0h0M883.6 314.0h0M736.1 245.5h0M883.1 331.0h0M897.5 304.7h0M751.8 379.7h0M907.5 324.0h0M817.2 365.2h0M709.6 346.7h0M694.2 326.4h0M712.5 298.4h0M696.2 234.8h0M751.0 270.2h0M858.8 348.7h0M748.2 338.2h0M779.9 341.4h0M719.1 231.5h0M788.0 334.1h0M710.6 339.5h0M893.4 324.8h0M755.7 289.8h0M883.1 338.9h0M780.8 294.9h0M691.0 371.3h0M707.8 324.5h0M890.1 322.6h0M764.9 323.9h0M654.2 388.5h0M846.2 362.1h0M843.8 346.2h0M815.4 387.7h0M823.4 288.3h0M787.1 394.6h0M742.8 368.1h0M854.0 297.4h0M732.1 281.7h0M733.6 303.3h0" stroke="#e16462" opacity="0.68"/>
<path d="M651.5 391.3h0M885.0 318.5h0M730.3 277.4h0M688.7 351.8h0M674.7 366.0h0M739.1 301.8h0M913.4 338.4h0M855.3 386.4h0M752.5 361.8h0M861.3 343.2h0M811.1 337.6h0M887.7 410.8h0M835.3 391.0h0M740.9 256.9h0M818.8 373.1h0M708.3 303.1h0M679.3 353.6h0M702.0 335.6h0M733.8 386.4h0M798.3 362.8h0M809.1 285.4h0M865.0 343.0h0M755.4 287.6h0M900.1 297.0h0M740.9 389.7h0M664.0 365.6h0M823.8 358.7h0M867.1 378.5h0M699.3 317.4h0M831.2 319.0h0M807.3 409.9h0M700.8 228.7h0M717.2 212.5h0M866.3 325.0h0M843.0 318.2h0M687.5 328.9h0M676.8 301.8h0M877.3 370.6h0M749.4 254.1h0M685.6 307.3h0M727.2 236.8h0M731.5 288.2h0M735.9 252.7h0M714.7 311.7h0M830.1 395.8h0M772.2 405.7h0M817.1 382.1h0M735.1 415.7h0M890.8 369.0h0M739.0 365.0h0M710.5 302.4h0M897.7 305.9h0M770.4 326.8h0M738.2 275.9h0M707.6 373.7h0M711.8 365.7h0M701.9 337.5h0M909.1 394.5h0M837.4 431.3h0M770.9 341.2h0M712.6 250.3h0M701.4 266.8h0M683.4 343.6h0M783.5 406.8h0M793.4 380.5h0M698.7 391.8h0M674.4 445.0h0M827.3 317.8h0M789.6 353.1h0M759.4 383.4h0M675.8 363.7h0M754.4 305.3h0M759.6 281.5h0M694.9 383.2h0M739.6 364.0h0M819.6 311.1h0M723.2 307.3h0M746.2 351.8h0M764.8 288.7h0M758.3 425.1h0M751.9 412.0h0M880.2 352.8h0M825.0 426.8h0M688.9 428.2h0M715.3 256.4h0M830.0 388.9h0M888.3 307.0h0M754.7 334.8h0M716.2 255.2h0M661.8 323.3h0M814.7 327.7h0M723.5 310.7h0M755.0 316.3h0M744.6 217.4h0M719.7 305.9h0M852.7 346.5h0M798.6 322.2h0M845.3 341.3h0M681.8 345.5h0M781.3 384.5h0M795.4 353.4h0M837.1 315.0h0M686.2 315.8h0M745.0 237.8h0M885.8 329.3h0M865.3 332.5h0M735.5 314.0h0M749.3 493.4h0M743.0 372.1h0M679.8 291.5h0M878.9 353.5h0M889.8 425.8h0M653.4 380.9h0M864.2 306.7h0M868.9 347.6h0M825.1 383.6h0M700.1 393.4h0M687.5 343.9h0M706.1 244.6h0M728.8 275.6h0M763.5 357.5h0M714.9 353.0h0M686.5 335.5h0M751.8 371.4h0M676.2 419.3h0M737.7 263.0h0M773.5 368.5h0M696.6 344.2h0M729.9 286.2h0M785.0 368.9h0M876.7 422.6h0M804.4 381.6h0M672.6 389.1h0M763.6 320.2h0M749.2 314.8h0M746.6 360.1h0M895.0 431.0h0M841.2 354.2h0M673.6 327.1h0M700.4 357.6h0M777.2 355.2h0M854.2 303.0h0M728.6 217.4h0M754.1 371.4h0M716.2 367.8h0M729.0 249.8h0M772.3 265.0h0M752.5 347.0h0M733.2 440.8h0M790.8 276.8h0M712.7 240.7h0M707.1 404.2h0M700.0 312.8h0M880.5 325.6h0M712.7 397.0h0M826.4 368.6h0M695.6 267.4h0M723.1 348.5h0M708.6 359.6h0M682.2 291.9h0M834.4 336.0h0M748.5 374.3h0M854.5 417.2h0M679.2 269.1h0M842.7 345.0h0M832.5 299.6h0M726.3 234.6h0M728.3 229.9h0M702.1 293.9h0M855.1 337.8h0M920.7 396.1h0M751.6 282.2h0M852.1 336.4h0M703.8 306.4h0M725.2 276.9h0M718.5 304.1h0M829.3 373.8h0M712.2 397.2h0M682.7 381.6h0M768.7 376.4h0M905.7 334.9h0M771.2 289.1h0M693.9 318.1h0M744.8 203.2h0M697.0 395.5h0M891.0 343.9h0M823.5 360.5h0M747.3 421.8h0M741.2 432.8h0M718.3 216.3h0M773.5 326.7h0M800.2 394.7h0M832.9 307.8h0M818.6 368.8h0M725.3 290.0h0M819.3 339.2h0M738.7 373.5h0M735.9 255.6h0M859.9 342.4h0M927.6 366.7h0M679.8 424.5h0M821.5 409.4h0M685.6 348.3h0M735.4 429.4h0M803.3 438.1h0M831.2 331.1h0M852.2 325.9h0M701.7 387.8h0M819.5 340.7h0M884.2 370.2h0M711.8 227.9h0M756.3 337.0h0M885.4 315.8h0M733.8 360.1h0M870.3 318.3h0M748.2 290.6h0M774.9 443.8h0M804.9 414.4h0M795.7 334.4h0M775.8 282.3h0M700.1 339.6h0M666.1 322.9h0M769.1 392.7h0M729.0 379.4h0M657.3 346.1h0M821.4 357.0h0M722.0 233.6h0M857.4 354.9h0M751.6 303.8h0M714.7 452.0h0M786.0 398.4h0M771.4 370.1h0M705.3 386.1h0M809.0 418.0h0M744.0 340.5h0M742.8 284.8h0M734.7 260.1h0M724.7 410.0h0M705.3 381.4h0M717.8 379.1h0M714.7 218.1h0M910.4 367.5h0M707.7 270.1h0M684.6 358.2h0M734.1 218.4h0M754.8 344.2h0M680.9 277.6h0M761.6 308.4h0M755.3 482.5h0M844.3 354.9h0M670.8 289.7h0M752.3 291.2h0M709.4 353.9h0M721.0 314.4h0M816.1 344.8h0M711.8 357.7h0M729.4 302.2h0M717.9 213.8h0M689.3 249.7h0M716.0 223.0h0M905.5 356.3h0M817.8 387.1h0M667.1 390.8h0M685.9 444.4h0M800.0 354.1h0M772.6 411.2h0M770.7 398.1h0M724.0 351.7h0M760.5 217.8h0M790.1 395.2h0M735.0 260.2h0M830.4 429.6h0M920.7 344.3h0M720.0 306.2h0M758.3 276.9h0M825.5 357.7h0M763.6 374.7h0M786.3 341.2h0M714.5 216.7h0M699.2 223.9h0M750.3 311.3h0M747.2 325.1h0M680.1 367.4h0M662.0 420.7h0M765.5 380.7h0M751.5 473.4h0M797.5 296.9h0M711.4 412.2h0M889.3 355.0h0M721.8 255.1h0M697.9 431.0h0M724.4 469.4h0M908.6 336.8h0M762.2 382.2h0M738.1 348.0h0M771.0 388.4h0M721.1 297.1h0M854.4 337.0h0M688.8 363.9h0M873.9 345.3h0M750.3 319.4h0M726.1 309.0h0M753.4 299.8h0M771.1 374.7h0M678.6 299.1h0M918.4 375.1h0M738.6 240.1h0M720.8 309.0h0M751.5 200.0h0M713.8 254.6h0M891.2 309.7h0M885.0 370.5h0M722.4 215.6h0M665.8 380.1h0M772.5 229.9h0M757.3 330.6h0M766.2 323.7h0M845.9 366.5h0M806.9 382.9h0M719.1 226.0h0M713.0 239.1h0M716.0 277.9h0M704.0 366.7h0M670.1 310.6h0M818.5 343.1h0M733.7 423.6h0M742.3 376.3h0M768.1 362.4h0M842.3 327.2h0M838.1 343.5h0M711.7 359.4h0M803.5 397.8h0M699.1 317.5h0M747.3 362.5h0M784.5 450.6h0M706.6 301.8h0M769.5 374.9h0M657.6 371.2h0M680.0 434.6h0M809.4 362.7h0M684.9 319.8h0M750.8 366.3h0M787.9 478.0h0M801.0 404.7h0M748.1 201.5h0M878.2 352.8h0M865.8 384.6h0M658.9 339.5h0M786.7 291.7h0M743.2 278.5h0M684.4 270.0h0M825.2 408.7h0M845.3 358.8h0M915.7 347.0h0M754.9 370.4h0M703.2 301.0h0M661.7 401.8h0M706.7 235.9h0M727.8 337.7h0M822.9 357.7h0M691.1 359.7h0M893.2 339.7h0M845.2 398.2h0M694.2 349.0h0M876.7 420.0h0M700.2 436.7h0M762.1 318.3h0M706.7 369.8h0M779.7 348.7h0M689.1 258.0h0M648.5 363.9h0M745.2 330.3h0M688.2 260.2h0M815.3 392.3h0M908.6 359.3h0M862.3 370.9h0M703.5 287.0h0M766.1 423.3h0M758.5 457.5h0M719.9 231.4h0M823.7 381.3h0M723.9 217.1h0M783.1 458.6h0M703.2 256.2h0M692.3 299.5h0M772.1 374.5h0M778.3 331.3h0M813.7 329.2h0M705.7 331.6h0M687.0 274.1h0M713.7 220.3h0M684.9 415.0h0M773.6 337.0h0M742.6 225.9h0M681.1 362.2h0M766.5 356.0h0M728.4 272.3h0M838.6 351.0h0M731.6 365.3h0M711.5 371.9h0M652.0 352.6h0M680.8 360.2h0M815.2 405.7h0M730.6 377.5h0M747.4 240.4h0M668.2 332.9h0M731.9 323.6h0M854.5 337.8h0M703.9 381.6h0M784.3 361.9h0M679.0 347.3h0M701.2 385.5h0M875.8 370.1h0M700.9 443.4h0M687.4 251.4h0M706.7 265.5h0M826.5 362.8h0M772.4 352.1h0M713.4 296.4h0M694.7 307.2h0M710.8 231.3h0M712.6 341.8h0M771.7 446.0h0M853.9 381.5h0M713.9 411.8h0M878.8 349.4h0M781.1 406.3h0M911.2 379.3h0M744.1 278.6h0M743.0 296.1h0M767.6 387.7h0M676.1 402.7h0M840.7 370.8h0M756.2 393.1h0M682.4 277.2h0M756.5 278.2h0M754.1 343.7h0M751.7 365.4h0M893.5 364.2h0M808.4 347.5h0M803.0 421.7h0M919.7 374.7h0M874.3 360.8h0M675.0 292.6h0M875.7 316.9h0M757.7 228.8h0M902.8 337.0h0M833.3 331.6h0M892.4 322.5h0M657.5 329.1h0M764.5 362.7h0M764.5 242.1h0M653.5 337.8h0M741.9 371.6h0M882.4 343.4h0M763.7 209.3h0M684.6 276.4h0M766.9 341.1h0M761.3 221.7h0M794.3 341.9h0M681.7 302.3h0M705.0 223.6h0M783.6 407.7h0M851.1 341.9h0M702.2 324.1h0M743.6 333.4h0M673.1 325.3h0M777.9 324.7h0M729.2 357.8h0M690.8 343.6h0M708.8 244.9h0M683.2 318.3h0M721.0 401.6h0M711.4 370.4h0M695.3 392.6h0M716.8 236.6h0M703.2 306.1h0M918.6 362.3h0M698.7 283.3h0M668.1 361.4h0M902.5 330.5h0M818.2 354.2h0M783.3 388.0h0M806.0 368.6h0M912.0 342.2h0M795.1 399.0h0M897.5 401.6h0M756.0 280.6h0M754.6 453.6h0M878.9 363.0h0M849.8 341.5h0M704.0 291.1h0M696.8 425.7h0M843.4 362.1h0M782.9 400.1h0M668.3 382.3h0M850.6 388.5h0M711.5 359.5h0M717.0 225.7h0M795.3 273.9h0M718.6 301.8h0M747.4 262.4h0M693.9 391.4h0M713.3 218.3h0M840.2 392.3h0M739.3 291.9h0M815.4 345.2h0M813.1 383.5h0M882.2 390.8h0M744.2 298.3h0M743.7 267.2h0M677.6 342.1h0M691.1 268.4h0M866.1 372.7h0M736.2 214.0h0M656.4 343.9h0M771.2 334.3h0M703.9 349.8h0M753.4 373.2h0M722.9 276.9h0M901.4 326.3h0M706.7 264.3h0M694.1 371.5h0M718.6 366.6h0M763.8 323.3h0M814.0 405.6h0M657.0 342.4h0M685.4 345.9h0M810.2 342.7h0M786.2 383.2h0M678.8 430.0h0" stroke="#b12a90" opacity="0.68"/>
<path d="M703.4 274.4h0M718.4 369.7h0M825.4 372.8h0M719.2 429.5h0M720.0 249.0h0M810.9 410.7h0M677.2 405.9h0M852.4 334.5h0M667.1 360.4h0M822.1 342.4h0M845.7 319.4h0M753.3 421.0h0M704.3 363.2h0M790.1 462.0h0M675.4 325.3h0M719.0 347.5h0M762.9 411.5h0M760.8 393.3h0M884.0 373.5h0M692.0 359.1h0M861.2 341.5h0M668.2 358.4h0M864.6 371.8h0M883.9 371.3h0M684.6 400.3h0M916.3 350.9h0M716.7 365.8h0M848.4 396.6h0M900.9 343.5h0M919.3 357.9h0M676.0 292.8h0M683.2 366.8h0M700.8 273.1h0M668.6 324.3h0M720.4 404.6h0M804.3 392.1h0M738.0 357.5h0M728.7 332.9h0M674.5 288.7h0M699.6 387.5h0M726.2 311.1h0M720.8 246.2h0M721.2 392.1h0M734.8 416.8h0M672.1 334.7h0M843.4 398.7h0M688.2 349.5h0M767.2 386.5h0M716.1 374.2h0M690.3 309.3h0M768.1 383.3h0M709.5 302.9h0M734.8 309.2h0M858.2 392.0h0M711.2 439.3h0M781.2 410.1h0M874.5 335.2h0M734.2 504.6h0M849.6 394.2h0M810.8 339.5h0M777.9 429.4h0M749.1 445.3h0M675.3 286.1h0M774.8 400.4h0M747.7 327.3h0M786.9 417.5h0M708.7 374.2h0M688.3 339.7h0M690.1 312.7h0M681.3 263.4h0M825.4 383.9h0M745.9 471.2h0M899.3 396.8h0M881.9 355.6h0M721.5 484.5h0M783.2 408.3h0M689.8 294.1h0M693.7 314.5h0M713.5 246.3h0M731.4 371.0h0M836.3 379.2h0M860.4 323.9h0M699.3 263.2h0M874.7 317.0h0M683.9 293.5h0M722.4 234.6h0M673.0 288.6h0M811.7 392.5h0M726.3 383.3h0M758.4 287.7h0M901.3 307.0h0M751.5 363.6h0M844.8 364.9h0M784.9 390.1h0M717.0 358.8h0M789.5 394.2h0M702.0 396.7h0M803.8 431.4h0M826.2 396.3h0M912.7 336.2h0M752.5 418.0h0M665.2 427.7h0M739.6 350.9h0M704.5 389.6h0M656.8 381.7h0M909.9 407.2h0M809.7 431.9h0M751.2 414.0h0M718.5 427.5h0M860.7 359.8h0M788.1 406.0h0M859.4 336.6h0M851.0 401.8h0M908.8 366.3h0M846.7 336.7h0M757.1 418.0h0M673.5 329.5h0M857.7 388.7h0M845.0 394.9h0M718.1 341.4h0M832.8 348.5h0M654.2 367.0h0M708.1 235.6h0M722.2 392.0h0M778.7 382.4h0M719.7 220.0h0M692.5 338.8h0M735.4 411.1h0M793.6 326.0h0M666.1 359.9h0M716.4 244.8h0M735.2 394.4h0M920.0 391.3h0M771.0 420.4h0M918.8 396.7h0M754.5 377.4h0M699.8 299.6h0M677.9 325.7h0M687.1 358.9h0M685.9 348.5h0M707.5 334.7h0M838.3 369.7h0M839.1 307.3h0M791.2 448.7h0M744.5 398.5h0M724.0 481.3h0M670.1 422.5h0M884.4 320.7h0M690.7 332.7h0M683.1 342.1h0M848.1 415.5h0M779.8 470.8h0M790.6 406.5h0M864.6 436.6h0M796.6 341.8h0M802.6 381.3h0M860.6 403.9h0M852.2 434.5h0M919.9 354.3h0M759.9 378.0h0M849.5 353.6h0M666.4 364.5h0M798.7 416.8h0M872.1 435.4h0M748.1 491.7h0M738.8 316.9h0M867.3 343.0h0M742.2 281.6h0M898.6 378.4h0M662.1 393.0h0M830.3 417.3h0M724.6 224.7h0M715.8 468.6h0M812.7 443.2h0M745.0 404.2h0M738.4 310.5h0M755.9 331.1h0M851.0 329.0h0M902.4 365.9h0M718.8 380.1h0M652.1 344.1h0M873.3 363.0h0M783.4 410.0h0M830.6 411.4h0M827.9 394.6h0M671.1 327.6h0M677.8 371.4h0M830.0 355.6h0M694.6 435.9h0M683.0 364.5h0M692.1 355.8h0M690.6 357.3h0M664.5 362.1h0M753.8 409.3h0M865.3 329.0h0M737.3 310.9h0M917.3 398.3h0M665.3 321.7h0M904.4 415.3h0M722.8 479.3h0M775.0 379.3h0M859.0 427.8h0M867.8 371.6h0M868.2 384.7h0M727.1 394.1h0M854.4 377.1h0M899.1 363.8h0M741.3 421.9h0M903.0 315.5h0M820.7 374.6h0M672.3 353.6h0M762.1 419.6h0M829.2 342.2h0M689.7 340.6h0M728.8 468.0h0M673.4 366.0h0M799.2 400.2h0M715.6 285.1h0M894.5 375.8h0M734.7 229.9h0M681.5 345.9h0M669.0 415.0h0M739.1 412.1h0M828.2 339.5h0M694.7 385.9h0M868.6 366.5h0M712.9 413.6h0M682.5 416.4h0M686.5 371.5h0M699.9 221.2h0M751.3 386.3h0M777.6 387.5h0M673.2 359.0h0M737.7 489.1h0M701.8 362.2h0M735.5 285.2h0M711.8 343.2h0M693.0 418.6h0M709.0 415.8h0M703.4 257.4h0M853.6 393.7h0M789.3 457.9h0M741.7 415.0h0M757.6 377.2h0M697.5 454.0h0M755.4 460.1h0M915.4 350.7h0M668.8 415.7h0M723.0 422.6h0M693.3 285.1h0M680.6 271.0h0M746.8 382.3h0M671.3 372.5h0M737.7 359.1h0M832.9 340.1h0M898.8 368.0h0M723.0 305.4h0M853.8 338.3h0M689.4 369.9h0M699.9 383.8h0M792.5 400.8h0M699.7 353.3h0M846.4 353.4h0M698.4 361.7h0M895.3 360.2h0M732.6 324.7h0M861.1 329.6h0M817.6 364.5h0M907.8 416.6h0M838.2 363.6h0M708.8 255.9h0M690.6 306.8h0M681.0 265.0h0M741.8 400.3h0M861.9 400.7h0M876.0 363.5h0M716.1 357.6h0M913.6 402.2h0M781.1 410.1h0M779.7 400.5h0M900.3 331.2h0M912.3 416.5h0M891.9 429.6h0M899.5 298.9h0M906.7 341.0h0M834.8 333.8h0M703.2 373.0h0M764.4 301.3h0M841.8 319.5h0M807.0 425.1h0M714.8 457.9h0M876.8 425.8h0M720.1 275.9h0M688.3 384.9h0M684.0 431.2h0M819.3 387.9h0M836.9 377.4h0M860.2 325.4h0M779.3 406.2h0M720.8 354.7h0M681.3 355.5h0M891.4 365.2h0M652.9 406.1h0M769.3 408.7h0M858.9 358.7h0M893.5 349.8h0M900.2 295.2h0M692.6 328.2h0M706.2 230.5h0M687.1 337.8h0M855.5 343.0h0M687.1 383.4h0M724.1 424.1h0M751.7 422.1h0M775.7 392.4h0M702.0 393.8h0M773.0 401.9h0M753.9 402.5h0M770.1 399.5h0M873.8 366.8h0M800.5 424.5h0M686.3 252.1h0M686.9 406.2h0M687.5 272.9h0M739.1 350.5h0M889.7 363.1h0M665.0 428.0h0M691.0 335.4h0M880.9 383.6h0M826.6 365.0h0M679.7 334.0h0M655.2 341.3h0M736.3 429.5h0M895.3 431.7h0M755.9 308.1h0M768.0 333.2h0M908.9 364.6h0M701.9 334.6h0M711.7 250.0h0M868.9 351.4h0M684.7 387.3h0M710.7 369.6h0M681.6 355.6h0M736.2 389.9h0M837.7 361.1h0M813.3 425.1h0M685.3 357.9h0M697.5 284.5h0M723.4 368.1h0M720.2 287.5h0M821.6 401.7h0M738.5 414.1h0M676.5 301.5h0M707.6 224.3h0M691.4 346.7h0M891.9 424.6h0M760.1 407.4h0M845.1 336.2h0M724.9 327.8h0M847.4 350.2h0M848.7 349.6h0M674.5 376.8h0M748.6 205.8h0M745.1 430.3h0M662.1 361.6h0M701.2 252.2h0M760.7 523.6h0M908.5 360.8h0M796.9 448.0h0M705.5 308.7h0M691.1 372.2h0M681.0 319.6h0M892.8 432.7h0M776.3 392.1h0M790.9 408.6h0M705.8 330.5h0M718.3 388.8h0M902.6 410.6h0M745.0 339.3h0M728.9 318.6h0M727.1 478.3h0M739.4 203.9h0M714.0 286.1h0M795.5 338.9h0M859.2 348.9h0M744.6 425.8h0M811.3 334.0h0M698.2 391.7h0M735.9 289.7h0M665.0 405.5h0M863.0 333.0h0M732.5 377.0h0M885.7 395.4h0M755.2 378.5h0M828.7 415.3h0M814.0 351.5h0M808.8 447.5h0M738.0 341.8h0M792.3 435.3h0M690.7 242.2h0M903.5 406.9h0M720.3 304.9h0M843.9 420.1h0M699.8 324.8h0M734.3 233.7h0M745.8 322.2h0M747.0 414.3h0M782.7 403.4h0M736.8 417.8h0M761.1 401.3h0M817.0 360.5h0M825.3 377.0h0M692.0 285.4h0M690.0 382.7h0M801.2 376.0h0M920.6 402.2h0M921.6 393.5h0M672.0 357.5h0M725.9 250.9h0M880.1 327.7h0M659.5 395.3h0M731.1 317.7h0M728.8 348.2h0M663.0 327.4h0M789.7 452.8h0M693.4 366.5h0M926.0 362.6h0M891.8 363.3h0M755.9 389.8h0M759.3 403.6h0M692.4 348.6h0M721.4 482.9h0M829.0 389.1h0M658.3 358.2h0M850.9 380.0h0M831.9 391.3h0M705.1 378.8h0M864.1 348.9h0M813.9 410.7h0M821.1 361.3h0M721.0 429.0h0M700.8 273.3h0M795.4 406.8h0M719.8 429.2h0M748.5 416.1h0M847.3 368.0h0M661.0 362.5h0M738.2 286.3h0M677.0 288.7h0M744.4 334.7h0M834.2 387.3h0M721.1 400.2h0M717.7 251.6h0M896.9 318.7h0M685.8 348.5h0M858.3 364.9h0M767.4 423.7h0M717.2 381.2h0M683.9 267.3h0M740.1 362.9h0M858.4 424.3h0M657.8 333.1h0M663.5 375.9h0M870.8 365.4h0M698.2 393.5h0M709.1 360.4h0M703.8 274.4h0M667.0 316.5h0M735.4 372.9h0M781.7 476.3h0M872.2 330.1h0M681.0 342.2h0M707.5 347.8h0M727.4 348.1h0M687.5 445.9h0M682.0 265.9h0M765.7 331.0h0M846.5 407.4h0M669.7 299.2h0M784.4 418.6h0M723.4 370.8h0M712.0 257.2h0M668.5 405.1h0M732.2 221.5h0M835.4 356.0h0M764.2 406.5h0M714.6 275.9h0M827.7 436.2h0M714.6 472.3h0M673.0 398.8h0M860.3 364.7h0M809.2 393.2h0M709.9 354.7h0M707.0 362.8h0M896.0 418.7h0M858.0 360.8h0M738.5 278.6h0M703.7 337.3h0M897.1 412.1h0M735.9 283.7h0M742.0 301.6h0M750.4 428.4h0M876.9 409.5h0M666.9 309.0h0M662.1 420.2h0M728.0 237.2h0M686.0 348.0h0M748.1 328.9h0M872.9 337.1h0M685.0 394.1h0M881.8 328.2h0M687.3 314.4h0M695.4 430.8h0M688.5 249.3h0M813.3 352.8h0M690.8 354.8h0M825.0 360.1h0M722.0 350.4h0M864.6 329.6h0M705.9 264.3h0M907.5 348.1h0M816.7 441.7h0M743.2 389.4h0M748.6 364.2h0M782.4 326.3h0M736.9 474.6h0M778.4 423.8h0M884.0 339.8h0M666.8 311.0h0M867.9 343.1h0M681.3 356.0h0M704.3 326.9h0M908.9 419.1h0M757.1 370.2h0M677.0 374.9h0M837.4 340.5h0M885.4 430.6h0M700.1 295.8h0M756.9 397.6h0M832.0 340.9h0M739.3 321.3h0M821.7 393.7h0M780.3 395.2h0M858.4 401.0h0M716.2 382.5h0M696.5 291.2h0M677.4 296.4h0M687.4 280.2h0M838.4 390.0h0M718.9 348.6h0M779.9 307.7h0M810.1 440.1h0M712.0 221.8h0M679.5 371.0h0M714.8 398.0h0M871.1 378.2h0M759.1 298.7h0M858.6 376.2h0M720.4 309.9h0M663.5 320.6h0M840.7 419.3h0M677.6 443.3h0M794.4 395.2h0M706.6 406.1h0M872.6 405.3h0M794.3 472.5h0M815.7 327.3h0M821.7 356.7h0M909.4 407.6h0M681.3 323.4h0M667.4 334.6h0M751.0 334.8h0M818.5 359.8h0M780.9 386.4h0M837.3 392.2h0M722.1 373.2h0M906.4 341.2h0M846.7 343.0h0M878.1 349.1h0M649.7 399.3h0M709.9 329.9h0M894.9 326.7h0M757.6 396.0h0M671.1 303.8h0M895.4 322.2h0M828.8 345.6h0M810.6 334.7h0M710.7 267.8h0" stroke="#8f0da4" opacity="0.75"/>
<path d="M834.1 398.3h0M883.6 419.9h0M756.5 408.7h0M712.7 324.4h0M733.0 394.6h0M794.4 439.2h0M903.6 417.9h0M879.7 350.1h0M699.7 276.5h0M878.1 374.8h0M823.5 367.8h0M698.1 280.6h0M878.6 417.0h0M776.9 444.2h0M796.5 426.8h0M674.8 298.7h0M666.6 347.8h0M828.1 424.5h0M878.3 372.1h0M721.4 217.0h0M686.4 428.4h0M698.0 430.2h0M736.0 259.3h0M727.8 465.8h0M896.7 361.1h0M686.5 396.1h0M735.4 480.4h0M759.4 393.0h0M671.1 370.8h0M752.1 511.4h0M663.2 349.3h0M699.2 333.5h0M886.1 415.3h0M833.1 404.6h0M829.1 381.7h0M886.8 376.3h0M832.3 379.6h0M736.4 389.2h0M828.1 437.2h0M855.4 395.8h0M674.5 282.1h0M724.8 413.0h0M671.5 370.8h0M732.3 267.6h0M771.6 323.3h0M863.8 358.6h0M736.7 277.0h0M653.6 409.0h0M891.8 389.4h0M649.5 396.3h0M860.8 410.2h0M685.0 371.3h0M702.9 228.9h0M790.1 469.4h0M740.4 423.9h0M747.1 512.3h0M674.2 298.7h0M677.1 411.4h0M812.2 384.5h0M711.2 405.9h0M730.5 382.9h0M691.6 437.0h0M737.1 379.3h0M692.7 290.8h0M759.4 312.8h0M866.1 418.5h0M726.1 297.2h0M735.8 305.8h0M724.7 357.0h0M761.4 473.1h0M693.6 424.1h0M826.0 372.2h0M688.6 436.0h0M663.5 310.2h0M745.1 393.9h0M796.8 414.6h0M821.2 435.0h0M794.3 462.1h0M775.7 398.2h0M827.6 368.2h0M683.3 421.4h0M869.4 366.6h0M887.8 365.5h0M824.7 430.5h0M716.7 446.6h0M849.9 404.3h0M660.0 410.5h0M712.2 274.0h0M881.1 385.6h0M904.1 399.9h0M847.7 426.1h0M841.0 343.2h0M691.9 344.7h0M763.8 423.5h0M796.8 431.9h0M814.9 399.1h0M651.2 357.1h0M652.5 341.5h0M850.6 322.1h0M862.8 371.4h0M675.6 348.9h0M836.6 427.6h0M820.8 364.4h0M762.4 458.4h0M908.6 388.4h0M852.2 437.6h0M823.8 429.6h0M751.0 454.8h0M739.6 411.4h0M755.7 481.7h0M802.0 431.8h0M742.8 242.0h0M917.7 378.9h0M876.9 347.4h0M665.6 318.6h0M695.3 350.3h0M651.3 394.1h0M674.5 372.4h0M909.6 366.6h0M714.4 296.5h0M772.2 409.4h0M901.0 385.2h0M912.1 404.7h0M707.6 264.7h0M771.6 414.9h0M809.9 364.3h0M748.6 506.0h0M889.9 368.6h0M894.2 392.1h0M733.2 481.2h0M720.4 445.0h0M686.3 375.0h0M738.6 403.0h0M712.0 223.6h0M785.7 432.3h0M662.1 422.8h0M691.3 364.2h0M911.7 379.4h0M688.8 334.3h0M826.5 436.9h0M818.2 398.2h0M904.1 381.8h0M654.4 390.0h0M676.5 443.2h0M768.8 384.5h0M688.4 305.2h0M712.7 386.0h0M733.5 241.9h0M754.4 468.4h0M821.4 422.8h0M860.5 375.6h0M817.7 357.7h0M765.0 377.6h0M808.7 410.2h0M727.1 230.5h0M803.9 420.9h0M837.8 376.3h0M863.1 429.9h0M752.1 470.9h0M710.7 405.2h0M818.4 366.5h0M739.9 477.0h0M849.5 373.1h0M748.1 424.1h0M696.0 409.1h0M720.7 384.7h0M881.8 328.5h0M925.2 379.0h0M711.0 373.4h0M778.3 443.2h0M726.0 410.8h0M725.5 360.7h0M654.9 383.7h0M662.3 360.7h0M650.9 361.2h0M853.1 336.4h0M903.8 376.6h0M885.7 407.3h0M729.7 374.4h0M823.2 421.5h0M785.7 458.9h0M741.0 369.9h0M917.4 400.3h0M713.4 260.5h0M842.9 394.2h0M861.4 374.8h0M868.9 412.7h0M720.2 362.5h0M901.6 335.4h0M689.5 248.0h0M867.5 382.2h0M762.4 456.2h0M815.2 420.7h0M708.7 417.8h0M769.3 408.0h0M755.9 471.8h0M915.2 349.2h0M892.6 370.6h0M812.0 419.7h0M692.6 425.7h0M859.2 389.6h0M750.2 461.1h0M654.1 372.4h0M758.8 420.1h0M856.6 413.2h0M843.6 405.5h0M655.1 377.9h0M888.8 344.4h0M668.8 298.7h0M924.5 397.9h0M720.6 400.4h0M771.1 358.9h0M704.1 307.8h0M754.8 422.4h0M737.4 437.9h0M706.5 243.9h0M721.3 401.6h0M654.5 333.8h0M915.1 385.1h0M683.9 443.6h0M790.2 419.6h0M723.8 409.7h0M845.1 360.6h0M925.7 372.2h0M822.2 405.9h0M732.7 439.1h0M874.1 378.7h0M865.7 359.3h0M788.3 465.5h0M844.3 424.7h0M866.5 352.1h0M863.1 425.8h0M915.1 362.0h0M907.8 423.3h0M716.7 463.0h0M857.8 373.7h0M801.9 447.7h0M876.9 421.7h0M784.9 396.5h0M684.2 394.2h0M688.9 453.7h0M652.4 400.8h0M865.2 427.5h0M737.0 414.1h0M866.2 392.1h0M697.4 234.4h0M802.2 411.2h0M842.9 345.0h0M780.7 413.4h0M718.6 426.7h0M730.0 275.5h0M816.1 400.1h0M716.4 314.7h0M880.5 349.3h0M815.5 404.8h0M751.3 379.6h0M858.8 370.4h0M743.3 416.4h0M920.1 363.1h0M705.3 337.4h0M718.4 486.6h0M706.9 364.9h0M756.4 426.6h0M774.5 427.6h0M811.8 401.3h0M906.2 367.4h0M915.3 408.7h0M770.7 316.7h0M914.4 392.6h0M830.6 353.2h0M740.2 447.8h0M867.9 383.8h0M736.3 365.9h0M813.5 419.6h0M857.0 370.7h0M759.8 371.2h0M820.3 354.0h0M717.7 295.8h0M741.1 386.0h0M724.9 229.9h0M733.8 252.0h0M693.9 275.8h0M771.1 348.0h0M687.1 262.8h0M737.8 350.7h0M884.2 328.4h0M824.3 426.3h0M701.5 310.6h0M819.9 415.1h0M706.0 374.7h0M746.5 412.8h0M761.1 423.2h0M670.4 345.9h0M813.9 377.4h0M798.2 411.5h0M837.7 422.1h0M765.1 458.0h0M720.1 475.8h0M655.9 331.8h0M750.9 466.8h0M771.6 400.8h0M656.4 342.6h0M720.3 357.7h0M900.8 380.9h0M701.4 399.4h0M694.3 398.1h0M668.4 336.5h0M850.6 368.7h0M759.9 410.1h0M778.9 406.6h0M873.3 433.0h0M830.3 383.4h0M811.7 377.4h0M743.3 429.2h0M676.1 393.5h0M891.2 390.5h0M829.0 372.4h0M918.7 373.7h0M702.7 293.4h0M861.4 372.5h0M912.3 412.0h0M725.0 347.8h0M724.3 354.6h0M740.2 490.1h0M863.8 362.7h0M818.7 404.6h0M847.6 437.2h0M746.5 510.7h0M843.6 392.7h0M728.5 486.5h0M674.0 407.5h0M903.6 389.2h0M718.1 224.2h0M877.3 331.9h0M710.0 241.0h0M843.0 370.9h0M915.9 366.5h0M724.8 390.9h0M698.7 336.3h0M669.3 377.1h0M810.2 391.7h0M788.5 418.5h0M738.8 441.4h0M693.6 440.9h0M671.3 356.2h0M662.3 400.1h0M721.1 378.0h0M801.3 406.1h0M850.2 348.8h0M893.2 402.8h0M913.9 405.7h0M808.5 443.7h0M697.5 394.4h0M659.5 397.5h0M871.6 393.6h0M724.3 469.0h0M845.9 342.7h0M722.8 489.1h0M671.0 397.6h0M670.9 306.2h0M732.4 389.0h0M816.3 433.0h0M764.2 421.5h0M763.0 462.0h0M702.8 241.8h0M680.2 386.0h0M854.4 414.1h0M746.5 316.3h0M762.3 405.7h0M860.8 341.9h0M809.2 441.8h0M804.5 453.9h0M911.4 415.7h0M689.3 418.9h0M868.6 334.8h0M864.8 390.4h0M717.0 334.0h0M765.7 401.4h0M856.6 428.1h0M924.7 395.2h0M665.5 349.7h0M664.5 320.1h0M877.1 379.7h0M760.8 525.5h0M880.0 327.8h0M675.6 371.7h0M806.7 434.0h0M887.1 401.9h0M790.6 417.2h0M901.3 369.6h0M742.6 385.7h0M758.2 314.0h0M916.9 400.0h0M804.7 433.2h0M744.5 356.9h0M863.1 374.5h0M700.6 353.2h0M895.6 411.8h0M723.2 354.2h0M842.6 425.7h0M835.8 423.9h0M849.0 332.7h0M744.7 299.8h0M840.1 393.1h0M810.9 367.1h0M848.8 417.2h0M712.7 485.0h0M783.1 425.6h0M869.4 401.0h0M856.3 434.1h0M754.0 419.2h0M846.2 336.1h0M718.7 366.5h0M760.0 408.4h0M698.5 398.9h0M903.3 379.7h0M826.4 340.6h0M724.2 479.9h0M803.0 386.5h0M686.5 332.1h0M856.0 427.8h0M845.4 400.9h0M682.9 395.4h0M689.5 359.0h0M669.9 363.7h0M755.2 417.3h0M851.9 403.2h0M823.0 367.0h0M671.8 328.4h0M700.6 315.5h0M859.5 353.7h0M692.3 238.4h0M746.1 393.6h0M728.4 428.2h0M665.2 373.4h0M680.4 327.5h0M683.6 411.8h0M815.3 343.4h0M880.0 393.8h0M814.0 360.8h0M736.3 499.3h0M817.2 441.0h0M923.4 369.1h0M726.9 331.3h0M739.5 503.4h0M825.2 399.7h0M869.9 429.3h0M697.9 375.1h0M687.9 307.4h0M845.1 340.7h0M888.9 394.3h0M746.1 380.8h0M693.0 453.2h0M813.9 415.0h0M747.9 419.2h0M736.3 388.1h0M659.1 359.8h0M918.6 354.4h0M844.3 414.5h0M866.2 406.9h0M805.4 441.2h0M843.6 372.9h0M648.9 388.3h0M822.0 424.6h0M783.0 401.7h0M685.7 453.8h0M920.6 382.8h0M683.7 416.9h0M830.1 400.3h0M878.8 410.9h0M711.1 310.8h0M882.7 430.7h0M860.2 376.8h0M846.6 436.7h0M800.4 412.5h0M785.3 446.6h0M746.8 325.2h0M669.5 389.5h0M749.8 391.9h0M669.5 378.7h0M727.5 363.5h0M710.3 252.2h0M753.4 474.1h0M798.2 415.5h0M661.1 360.3h0M693.9 377.4h0M664.8 381.9h0M675.7 348.6h0M806.3 375.4h0M722.6 331.5h0M730.0 418.4h0M906.7 371.3h0M839.0 413.4h0M735.8 304.4h0M768.3 404.9h0M759.7 469.4h0M807.1 385.8h0M902.0 321.3h0M748.9 513.1h0M848.9 403.3h0M919.3 382.4h0M865.9 369.1h0M653.2 395.9h0M843.4 349.5h0M734.5 251.2h0M751.0 420.2h0M832.6 418.4h0M734.6 424.5h0M804.4 404.6h0M658.8 401.4h0M656.4 355.8h0M720.3 274.8h0M803.1 433.3h0M740.0 481.9h0M745.7 290.2h0M758.0 367.4h0M896.8 423.9h0M810.0 419.7h0M683.4 377.6h0M826.2 373.0h0M773.0 383.5h0M729.4 496.1h0M683.4 387.3h0M893.1 418.5h0M768.2 286.9h0M754.5 351.4h0M908.3 350.7h0M884.0 412.3h0M892.5 401.0h0M810.7 383.6h0M893.0 374.5h0M820.1 424.1h0M873.9 368.8h0M662.8 412.5h0M858.0 358.4h0M713.5 252.0h0M804.6 419.4h0M901.3 429.2h0M744.7 381.6h0M890.8 400.7h0M859.0 380.3h0M762.8 517.2h0M750.3 396.4h0M704.9 236.0h0M862.6 376.2h0M735.0 442.8h0M837.9 372.1h0M702.8 223.8h0M759.4 417.6h0M695.6 387.5h0M672.3 436.7h0M847.4 407.0h0M875.9 423.3h0M693.8 424.7h0M803.1 406.7h0M842.0 433.9h0M901.4 360.1h0M717.6 482.6h0M748.3 470.1h0M698.0 427.7h0M819.1 423.8h0M849.2 378.3h0" stroke="#6a00a8" opacity="0.75"/>
<path d="M840.0 408.9h0M839.9 389.0h0M836.5 421.3h0M750.6 448.0h0M819.8 391.2h0M766.5 415.2h0M898.8 419.4h0M877.3 381.7h0M739.7 301.5h0M784.3 477.2h0M860.0 406.5h0M752.8 505.8h0M794.9 425.1h0M778.6 415.6h0M895.6 385.2h0M868.0 398.6h0M911.3 403.7h0M916.7 387.3h0M719.2 282.3h0M815.6 388.8h0M711.1 322.4h0M753.7 451.3h0M788.4 404.2h0M761.1 485.3h0M890.3 384.3h0M879.7 411.3h0M710.1 397.9h0M836.9 432.1h0M735.6 467.9h0M898.5 377.9h0M802.4 402.7h0M856.4 332.2h0M787.6 454.1h0M819.6 397.7h0M736.8 454.2h0M660.1 346.4h0M749.0 407.2h0M852.5 398.9h0M908.3 394.6h0M678.8 415.5h0M884.6 430.7h0M810.4 430.1h0M759.0 485.6h0M917.5 379.5h0M701.2 286.4h0M742.1 438.0h0M758.7 405.8h0M855.9 379.8h0M659.0 381.8h0M891.7 410.6h0M762.2 466.8h0M868.5 407.8h0M803.6 413.1h0M753.4 412.8h0M779.6 410.6h0M678.4 359.7h0M824.0 433.9h0M922.4 382.1h0M764.4 384.4h0M656.4 341.5h0M930.1 381.9h0M864.0 369.0h0M667.1 355.7h0M693.5 388.3h0M696.5 388.8h0M826.6 423.7h0M893.0 325.9h0M869.0 380.4h0M667.7 395.5h0M850.9 359.2h0M845.9 435.5h0M783.0 468.7h0M725.7 410.9h0M776.2 387.6h0M706.9 391.3h0M665.0 312.2h0M664.8 391.1h0M780.9 424.2h0M788.1 465.0h0M900.8 395.4h0M785.7 478.1h0M913.9 395.1h0M899.8 414.5h0M747.0 476.7h0M714.8 456.3h0M793.9 407.2h0M697.2 369.5h0M705.5 350.2h0M685.7 354.8h0M715.3 252.4h0M682.1 331.2h0M726.7 408.7h0M856.2 430.1h0M798.7 463.6h0M748.7 512.6h0M921.8 400.0h0M753.7 452.0h0M752.1 482.2h0M872.4 388.2h0M825.8 401.1h0M714.3 447.3h0M798.3 422.8h0M749.1 417.5h0M811.1 431.2h0M748.0 504.1h0M757.0 514.1h0M719.4 422.3h0M897.9 407.0h0M671.9 335.3h0M895.6 364.7h0M860.8 385.6h0M745.5 502.1h0M858.0 382.0h0M836.2 349.8h0M773.7 411.9h0M790.7 422.5h0M815.4 396.5h0M790.3 417.2h0M689.3 361.8h0M915.2 372.2h0M861.3 421.5h0M755.7 504.9h0M883.2 378.2h0M847.2 435.8h0M787.7 450.2h0M839.8 425.6h0M803.4 410.3h0M768.8 354.1h0M900.7 406.8h0M852.1 433.1h0M842.8 402.5h0M832.6 370.8h0M771.7 448.7h0M869.6 416.4h0M688.5 407.5h0M713.2 436.1h0M903.0 376.5h0M838.5 377.2h0M807.8 418.0h0M850.5 358.1h0M686.6 404.9h0M648.5 367.1h0M735.2 423.0h0M701.2 259.9h0M832.6 432.5h0M789.2 422.2h0M684.9 443.4h0M892.7 392.1h0M758.7 518.4h0M650.2 391.4h0M822.3 389.6h0M790.0 425.9h0M679.5 312.5h0M761.9 474.5h0M882.6 387.1h0M878.3 428.9h0M857.5 343.5h0M797.5 431.1h0M756.6 342.3h0M901.0 378.7h0M832.9 399.1h0M873.9 394.5h0M746.5 440.6h0M724.8 418.8h0M730.1 477.4h0M792.6 477.1h0M869.9 404.8h0M765.2 400.4h0M875.9 337.3h0M675.5 444.1h0M913.6 374.9h0M689.1 395.9h0M926.0 387.4h0M912.0 387.3h0M771.6 381.3h0M693.5 456.1h0M887.8 386.0h0M784.9 434.2h0M903.3 383.6h0M726.8 368.9h0M887.7 389.4h0M912.9 391.0h0M903.1 378.2h0M906.3 400.4h0M651.9 381.4h0M744.3 439.3h0M813.3 402.5h0M739.9 422.6h0M750.4 394.6h0M869.6 410.9h0M912.9 352.8h0M830.9 421.0h0M762.4 373.8h0M894.4 410.8h0M763.8 523.8h0M770.5 405.1h0M758.2 498.6h0M788.6 468.8h0M904.0 390.8h0M736.8 484.4h0M784.3 411.0h0M907.1 382.2h0M877.3 401.6h0M839.0 359.0h0M850.9 328.6h0M776.2 447.6h0M719.6 296.0h0M830.7 405.5h0M876.5 387.4h0M876.1 416.2h0M717.9 424.2h0M698.9 403.0h0M913.9 362.2h0M919.3 391.0h0M737.3 445.5h0M922.0 369.8h0M901.3 385.1h0M743.8 421.7h0M839.7 381.6h0M820.6 399.7h0M763.3 311.2h0M918.6 385.2h0M817.5 428.3h0M909.4 357.2h0M828.8 383.9h0M749.9 407.7h0M699.8 401.3h0M818.8 398.4h0M916.4 399.8h0M720.0 259.4h0M801.9 426.7h0M720.7 394.0h0M899.8 385.1h0M653.8 348.2h0M917.3 402.3h0M706.2 428.7h0M893.8 406.9h0M771.4 484.8h0M884.1 399.6h0M681.4 328.5h0M669.8 407.5h0M797.5 439.5h0M664.8 392.3h0M912.9 405.1h0M783.7 467.9h0M727.1 489.8h0M911.5 391.0h0M702.4 429.2h0M724.5 460.7h0M649.4 381.2h0M915.5 391.9h0M879.4 416.4h0M799.0 400.3h0M919.5 354.4h0M859.9 421.5h0M714.0 249.4h0M734.0 423.6h0M851.3 343.7h0M726.4 443.3h0M816.3 440.3h0M674.9 364.4h0M695.6 466.1h0M834.5 415.8h0M896.6 382.0h0M811.7 438.0h0M868.6 403.5h0M687.3 275.2h0M790.3 475.8h0M926.9 399.3h0M844.1 347.3h0M709.8 463.6h0M788.0 457.3h0M748.6 434.6h0M788.8 433.8h0M895.4 377.7h0M792.1 477.8h0M735.1 480.4h0M749.2 419.6h0M737.6 470.9h0M810.0 408.4h0M817.9 432.6h0M739.1 447.7h0M660.2 376.4h0M905.2 378.5h0M749.7 506.9h0M759.9 416.4h0M813.2 407.4h0M727.7 411.5h0M842.1 415.7h0M894.6 391.8h0M705.6 354.6h0M792.9 425.2h0M829.7 409.1h0M816.1 381.2h0M760.4 501.8h0M687.2 324.3h0M724.3 466.6h0M881.9 387.7h0M836.2 385.7h0M695.0 360.4h0M810.8 394.9h0M662.3 422.9h0M865.5 372.5h0M692.5 407.2h0M760.9 490.2h0M753.6 460.2h0M791.9 410.6h0M869.0 415.4h0M779.5 439.8h0M673.8 354.1h0M749.9 447.7h0M773.9 432.8h0M757.3 381.9h0M847.1 382.2h0M736.6 397.5h0M727.3 435.5h0M682.4 346.7h0M661.8 386.1h0M780.8 413.3h0M707.9 423.9h0M759.1 516.4h0M858.5 436.0h0M794.1 438.4h0M826.9 379.0h0M739.2 431.9h0M703.6 473.0h0M647.5 369.9h0M907.1 376.1h0M666.9 364.8h0M869.3 369.7h0M689.9 337.6h0M851.9 343.3h0M739.4 509.5h0M846.7 418.6h0M694.1 417.2h0M747.1 475.6h0M791.2 410.6h0M756.7 427.0h0M866.6 419.8h0M722.8 413.3h0M707.9 415.6h0M764.4 420.5h0M701.7 242.1h0M865.7 396.6h0M855.7 400.8h0M734.9 446.5h0M868.5 377.1h0M762.4 485.1h0M787.2 458.6h0M686.8 430.2h0M824.2 394.5h0M784.7 450.1h0M881.2 376.0h0M711.0 475.5h0M749.4 511.4h0M845.7 406.2h0M749.5 365.3h0M729.7 447.4h0M710.8 362.7h0M777.8 430.1h0M669.2 382.3h0M733.8 468.3h0M707.8 437.0h0M915.4 382.2h0M698.4 367.1h0M708.8 286.3h0M909.7 389.7h0M907.0 369.8h0M778.8 425.5h0M882.8 379.0h0M860.4 393.0h0M816.6 406.3h0M747.2 395.9h0M813.4 424.2h0M719.8 272.5h0M890.3 380.7h0M779.8 436.9h0M731.3 423.1h0M767.6 417.4h0M746.2 476.6h0M759.7 463.2h0M865.9 418.1h0M898.4 407.5h0M673.7 399.0h0M905.9 399.8h0M830.8 379.5h0M741.8 495.7h0M728.7 452.5h0M815.8 437.8h0M648.1 372.8h0M910.8 414.4h0M687.1 353.6h0M702.4 453.9h0M753.4 416.4h0M840.1 433.8h0M835.2 425.3h0M789.8 449.6h0M848.5 418.4h0M871.4 408.0h0M746.3 478.0h0M891.0 395.1h0M756.5 479.1h0M809.1 420.3h0M819.8 413.2h0M754.5 427.9h0M816.2 393.5h0M821.5 418.4h0M691.6 402.8h0M910.1 381.1h0M747.9 389.6h0M668.1 410.8h0M840.2 417.0h0M828.5 376.6h0M804.9 430.6h0M796.5 455.0h0M890.4 374.2h0M842.1 394.8h0M839.3 420.9h0M864.1 391.2h0M776.5 433.7h0M914.6 381.1h0M700.2 420.4h0M908.7 420.6h0M730.0 477.3h0M754.3 348.1h0M772.1 446.6h0M690.5 377.9h0M718.7 480.7h0M834.7 332.8h0M764.2 493.8h0M911.0 384.4h0M916.6 413.3h0M734.2 358.9h0M706.0 472.2h0M655.4 340.1h0M755.4 498.8h0M917.9 350.8h0M869.0 363.1h0M712.8 233.1h0M836.4 386.2h0M749.8 468.7h0M757.4 461.3h0M826.1 402.0h0M913.6 369.5h0M907.5 396.1h0M688.2 408.4h0M828.8 420.8h0M884.6 356.1h0M698.3 425.6h0M802.5 412.9h0M866.0 395.5h0M760.0 500.2h0M890.6 387.3h0M876.8 382.0h0M855.6 376.7h0M750.6 516.7h0M838.4 433.1h0M777.6 428.9h0M839.8 429.7h0M835.0 427.6h0M673.3 354.5h0M652.7 360.4h0M767.1 522.0h0M717.1 390.5h0M727.8 470.7h0M664.3 348.1h0M799.7 451.3h0" stroke="#41049d" opacity="0.9"/>
<path d="M793.0 448.3h0M863.5 436.0h0M704.1 452.3h0M685.8 365.4h0M772.0 433.1h0M893.8 387.6h0M785.7 423.8h0M867.7 432.0h0M719.5 460.2h0M800.8 440.2h0M731.7 456.5h0M737.7 447.5h0M724.8 435.5h0M749.8 517.6h0M725.3 495.1h0M899.6 394.0h0M902.6 394.0h0M736.2 431.4h0M775.6 381.9h0M891.7 410.6h0M874.7 415.5h0M747.0 468.6h0M855.3 420.9h0M919.1 386.7h0M747.3 456.3h0M914.2 401.4h0M918.6 371.2h0M776.8 446.4h0M719.7 470.7h0M732.1 473.4h0M855.0 382.3h0M856.5 396.8h0M740.1 476.6h0M800.5 440.0h0M735.8 454.0h0M860.7 433.5h0M703.6 433.8h0M898.8 404.4h0M707.5 402.1h0M822.7 405.1h0M889.2 394.4h0M852.4 416.1h0M877.5 414.0h0M761.4 474.5h0M895.1 383.6h0M785.0 437.6h0M704.2 398.3h0M757.1 456.2h0M781.4 404.9h0M744.0 437.7h0M832.4 423.8h0M768.6 451.1h0M855.4 384.1h0M788.8 484.5h0M843.1 426.5h0M804.2 398.1h0M823.0 402.6h0M788.4 451.8h0M828.7 415.6h0M783.4 422.8h0M890.0 382.7h0M783.9 437.2h0M899.1 393.2h0M750.1 429.0h0M893.1 430.9h0M756.9 467.9h0M724.5 453.6h0M816.4 423.3h0M887.5 433.2h0M757.0 512.6h0M723.8 466.3h0M704.3 469.7h0M855.0 430.7h0M770.0 412.5h0M849.3 401.9h0M722.4 430.3h0M826.6 392.6h0M748.9 453.5h0M781.3 455.1h0M894.9 431.0h0M876.7 411.1h0M861.1 402.5h0M854.2 426.5h0M921.9 400.8h0M816.7 414.9h0M835.5 424.6h0M841.9 403.9h0M862.0 419.9h0M806.3 434.8h0M838.2 419.7h0M832.9 427.6h0M752.8 504.0h0M719.3 475.0h0M898.7 391.6h0M909.5 383.7h0M807.1 423.0h0M692.5 431.8h0M855.9 400.9h0M750.7 509.5h0M748.5 457.2h0M769.9 418.2h0M805.5 415.4h0M811.2 385.8h0M783.3 405.0h0M843.8 391.1h0M794.3 469.8h0M792.7 427.0h0M918.9 389.4h0M910.9 403.0h0M655.8 409.0h0M654.9 385.0h0M869.4 422.2h0M874.2 428.9h0M749.2 454.7h0M792.2 434.4h0M787.7 428.6h0M885.8 410.1h0M742.3 444.3h0M777.4 448.2h0M750.1 495.1h0M700.8 460.1h0M867.9 383.4h0M720.2 459.7h0M781.1 425.2h0M710.4 368.0h0M732.1 471.1h0M719.3 460.3h0M737.2 425.6h0M745.9 485.2h0M829.7 397.2h0M899.9 396.8h0M867.8 408.1h0M926.8 386.5h0M828.4 407.2h0M708.7 459.7h0M752.7 492.5h0M741.9 509.7h0M735.7 451.0h0M924.7 351.8h0M833.1 417.5h0M744.3 487.4h0M901.5 384.9h0M829.3 414.8h0M780.7 440.1h0M752.2 500.0h0M731.0 445.2h0M678.8 388.3h0M713.5 473.5h0M754.4 511.7h0M734.0 461.5h0M753.6 506.0h0M756.2 412.8h0M756.1 485.9h0M920.4 378.6h0M756.8 491.2h0M839.3 436.4h0M884.0 422.0h0M797.1 421.0h0M864.5 418.5h0M736.9 489.9h0M787.5 425.8h0M898.7 385.2h0M888.2 399.2h0M705.5 378.4h0M891.4 410.9h0M720.1 405.2h0M756.4 422.9h0M870.6 420.4h0M853.1 410.0h0M899.1 383.7h0M757.6 509.7h0M723.8 486.8h0M902.8 394.3h0M755.8 495.8h0M918.2 393.0h0M856.8 408.8h0M733.1 431.6h0M852.8 435.4h0M730.2 451.4h0M803.9 435.0h0M756.1 426.8h0M692.3 459.0h0M757.9 513.1h0M776.2 412.1h0M839.8 383.0h0M837.5 403.8h0M704.1 459.3h0M777.2 426.8h0M760.5 499.9h0M766.4 454.6h0M811.9 366.4h0M843.8 426.5h0M901.0 383.0h0M650.2 361.8h0M721.4 459.8h0M895.1 426.2h0M724.0 480.2h0M853.2 373.0h0M789.3 426.6h0M694.5 375.1h0M700.6 437.6h0M825.6 404.4h0M759.5 495.1h0M755.2 515.6h0M910.4 376.3h0M882.4 401.0h0M892.1 411.1h0M791.6 429.7h0M681.6 420.0h0M879.0 428.2h0M857.7 417.2h0M796.6 399.9h0M763.9 456.7h0M672.1 357.0h0M880.9 432.1h0M925.5 401.0h0M748.4 501.7h0M745.1 452.5h0M806.3 443.9h0M758.8 490.1h0M793.8 465.4h0M754.5 459.5h0M738.8 430.1h0M875.5 412.4h0M897.0 405.1h0M727.3 443.1h0M697.4 392.3h0M718.6 406.9h0M704.1 428.6h0M742.8 465.8h0M841.4 436.3h0M717.1 430.5h0M851.7 431.5h0M749.9 493.8h0M924.7 364.5h0M737.2 488.1h0M844.0 401.3h0M780.6 445.7h0M739.9 415.2h0M750.3 469.4h0M821.6 403.3h0M780.9 439.8h0M785.4 434.3h0M739.3 419.5h0M744.0 424.6h0M891.7 402.4h0M754.3 466.2h0M920.6 389.6h0M739.6 501.6h0M724.7 475.1h0M903.7 421.1h0M757.7 492.5h0M798.4 420.7h0M898.7 386.0h0M836.0 417.8h0M751.7 477.9h0M656.7 394.0h0M864.1 375.5h0M896.4 384.9h0M733.0 474.0h0M720.4 243.7h0M686.2 382.2h0M735.5 466.3h0M819.7 413.5h0M718.1 454.2h0M783.2 413.4h0M743.0 426.5h0M902.9 385.6h0M859.8 388.4h0M837.8 401.7h0M817.5 426.0h0M752.4 462.8h0M734.3 491.1h0M748.3 503.1h0M744.5 460.6h0M914.4 413.4h0M761.7 493.9h0M727.8 429.9h0M768.8 419.5h0M762.8 522.8h0M873.6 381.3h0M740.7 458.7h0M699.7 429.1h0M831.6 402.5h0M858.6 363.8h0M909.9 414.1h0M893.4 432.5h0M777.9 443.6h0M688.7 462.4h0M825.2 420.4h0M890.4 403.7h0M794.5 451.6h0M899.1 387.3h0M773.8 434.0h0M818.5 363.6h0M730.3 430.1h0M906.4 367.5h0M786.1 438.0h0M766.9 491.3h0M746.4 511.5h0M714.7 221.4h0M748.7 455.0h0M746.4 466.1h0M746.3 472.3h0M763.2 520.4h0M739.3 450.3h0M742.3 429.4h0M866.7 433.6h0M685.9 321.7h0M849.3 416.9h0M840.1 398.2h0M885.6 397.4h0M909.7 384.6h0M723.4 453.0h0M743.2 494.5h0M809.5 438.9h0M840.2 411.3h0M746.3 471.8h0M855.7 352.9h0M719.0 490.7h0M889.2 409.9h0M838.8 427.2h0M910.7 376.0h0M879.3 380.9h0M831.8 433.6h0M721.9 487.1h0M747.1 469.7h0M756.8 493.3h0M896.1 398.3h0M825.6 424.0h0M769.0 449.5h0M881.0 385.4h0M736.1 453.0h0M867.9 375.0h0M841.8 388.4h0M771.1 427.0h0M744.0 452.2h0M861.3 377.5h0M913.6 407.9h0M834.4 403.7h0M784.5 457.2h0M756.4 483.5h0M690.7 462.7h0M796.5 428.9h0M815.0 393.4h0M735.1 428.2h0M911.7 390.7h0M716.2 310.8h0M780.1 441.3h0M815.9 400.7h0M884.3 430.3h0M848.5 366.7h0M903.0 394.2h0M748.4 433.4h0M751.0 420.2h0M749.3 482.6h0M707.6 254.8h0M919.9 359.4h0M747.6 502.6h0M756.1 515.4h0M781.1 416.7h0M781.0 428.0h0M750.0 455.0h0M723.3 414.1h0M780.7 433.6h0M677.4 298.0h0M829.2 430.4h0M872.3 402.2h0M741.9 438.3h0M780.8 399.1h0M851.8 417.6h0M831.7 402.9h0M747.2 435.7h0M901.3 406.7h0M845.7 399.9h0M756.9 504.2h0M781.0 433.0h0M739.0 448.5h0M755.2 498.3h0M726.6 425.1h0M739.3 293.9h0M825.9 435.6h0M797.6 411.6h0M789.7 435.3h0M742.2 425.3h0M702.2 238.3h0M825.2 416.7h0M763.6 491.0h0M757.6 467.7h0M894.3 372.7h0M785.0 434.1h0M828.0 434.5h0M765.0 418.9h0M865.7 369.6h0M752.7 505.8h0M727.2 413.7h0M859.7 420.9h0M902.6 377.1h0M659.5 379.2h0M653.4 389.7h0M888.3 394.3h0M864.2 408.8h0M858.0 426.6h0M752.6 483.1h0M906.7 400.1h0M686.8 455.1h0M807.5 428.9h0M742.2 445.9h0M842.9 379.8h0M906.1 367.2h0M817.3 427.4h0M750.9 503.7h0M912.1 402.0h0M799.2 442.5h0M755.5 488.1h0M739.0 355.9h0M763.7 482.1h0M850.5 374.3h0M872.9 382.4h0M879.7 384.0h0M687.5 454.0h0M780.0 419.8h0M831.4 407.0h0M780.6 438.0h0M738.1 448.3h0M732.1 457.1h0M908.4 416.5h0M901.3 402.6h0M715.6 440.3h0M818.4 425.1h0M750.8 481.6h0M708.4 448.6h0M813.6 431.3h0M716.3 440.9h0M683.2 432.1h0M911.6 388.7h0M844.4 425.9h0M878.2 372.5h0M896.8 396.7h0M758.5 492.9h0M712.6 468.2h0M837.8 407.1h0M875.3 408.1h0M761.6 491.5h0M832.2 407.5h0M893.3 382.3h0M753.5 479.4h0M755.8 468.3h0M894.7 400.5h0M753.5 371.7h0M803.9 449.6h0M724.8 493.0h0M847.1 425.9h0M886.8 392.8h0M909.8 415.6h0M840.4 433.0h0M878.5 414.9h0M777.1 423.5h0M799.7 440.6h0M781.2 427.3h0M871.9 419.7h0M835.3 397.9h0M799.7 432.3h0M856.8 404.1h0M702.9 367.0h0M842.4 422.4h0M760.2 519.0h0M701.1 450.2h0M745.9 503.2h0M810.3 423.7h0M878.3 434.7h0M698.0 436.9h0M915.8 406.9h0M662.1 406.6h0M702.9 448.4h0M751.7 493.7h0M758.9 487.7h0M750.2 487.5h0M756.0 515.5h0M797.3 440.6h0M833.9 390.0h0M758.9 491.1h0M875.4 414.7h0M907.8 373.8h0M838.3 414.4h0M841.5 388.8h0M740.9 440.4h0M924.8 395.3h0M716.0 444.3h0M671.8 438.4h0M753.6 462.9h0M705.3 394.8h0M889.1 421.3h0M879.1 381.9h0M751.4 404.0h0M894.4 406.7h0M794.1 434.8h0M697.9 457.7h0M848.3 414.9h0M909.3 372.8h0M806.8 433.1h0M780.8 446.6h0M805.8 431.8h0M871.2 424.7h0M727.0 438.6h0M762.8 418.6h0M852.7 395.2h0M817.3 427.1h0M772.5 428.0h0M738.4 426.8h0M686.9 409.1h0M748.4 491.5h0M918.4 397.7h0M706.3 351.6h0M780.3 436.6h0M760.0 504.9h0M759.8 469.0h0M807.3 439.6h0M912.1 410.0h0M766.9 453.0h0M684.8 267.6h0M730.2 443.1h0M812.5 427.8h0M763.6 477.8h0M777.0 421.2h0M758.2 476.4h0M876.2 434.8h0M753.2 515.7h0M810.5 419.5h0M732.9 446.5h0M742.7 431.4h0M740.9 495.5h0M915.3 361.5h0M825.0 411.0h0M681.3 441.7h0M745.6 424.3h0M794.0 412.3h0M756.0 499.0h0M695.4 387.7h0M744.7 470.2h0M702.3 440.4h0M755.4 420.8h0M835.0 425.0h0M882.2 433.5h0M744.2 474.5h0M869.8 427.2h0M857.9 372.3h0M747.4 360.5h0M915.7 405.0h0M901.6 373.6h0M662.6 424.1h0M714.9 486.3h0M729.2 462.7h0M719.7 471.7h0M806.9 373.3h0M897.6 386.1h0M738.1 465.8h0M836.9 424.9h0M741.5 426.3h0M701.0 403.7h0M816.9 405.9h0M773.9 423.8h0M870.6 385.9h0M798.2 451.9h0M777.8 437.8h0M730.3 495.2h0M738.6 477.7h0M759.8 526.6h0M849.2 403.8h0M798.1 447.7h0M842.2 408.7h0M760.9 458.1h0M762.8 412.8h0M858.1 433.4h0M808.7 423.5h0M893.0 354.4h0M741.9 466.8h0M715.7 439.8h0M731.3 441.3h0M921.3 401.2h0M721.0 446.1h0M741.3 499.9h0M791.4 452.0h0M859.1 423.9h0M726.9 439.2h0M728.4 440.3h0M897.5 403.9h0M784.7 423.9h0M832.0 368.9h0M901.4 384.6h0M750.1 500.4h0M747.0 510.4h0M727.2 437.8h0M744.4 468.7h0M836.2 400.3h0M761.1 475.0h0M904.2 374.3h0M784.9 437.0h0M755.2 496.7h0M786.8 480.9h0M925.3 379.3h0M861.4 394.6h0M756.1 452.7h0M661.6 397.4h0M901.0 389.9h0M775.1 434.5h0M757.3 477.9h0M715.4 467.9h0M902.1 379.1h0M739.6 442.1h0M920.7 372.4h0M850.6 428.8h0M830.4 379.6h0M867.7 398.8h0M742.0 487.3h0M753.6 492.5h0M761.9 488.3h0M793.0 433.6h0M747.4 501.1h0M893.5 405.5h0M751.6 515.5h0M689.0 398.7h0M782.8 423.7h0M723.7 471.1h0M752.0 421.7h0M777.3 406.5h0M744.6 455.5h0M729.7 474.7h0M834.2 427.0h0M876.0 375.0h0M790.4 451.8h0M841.2 408.2h0M913.0 390.3h0M888.6 405.2h0M848.1 400.2h0M860.8 406.4h0M918.2 400.3h0M849.4 355.0h0M880.3 403.4h0M784.1 408.2h0M732.0 498.2h0M905.7 409.2h0M790.1 421.5h0M848.7 386.8h0M857.3 414.1h0M839.2 416.7h0M880.5 390.8h0M833.7 434.7h0M753.7 457.0h0M908.9 378.5h0M721.4 470.8h0M793.6 469.1h0M788.2 424.9h0M914.8 408.4h0M733.7 448.5h0M758.3 504.9h0M753.4 495.0h0M739.0 457.1h0M666.1 413.6h0M658.8 323.6h0M922.3 381.6h0M763.6 489.0h0M902.8 370.2h0M849.7 417.5h0M731.8 469.1h0M821.2 421.4h0M764.2 419.0h0M841.4 374.3h0M732.9 441.6h0M884.7 397.5h0M860.7 424.6h0M759.2 464.0h0M767.3 425.7h0M810.3 410.9h0M716.2 461.5h0M923.3 393.4h0M910.3 395.1h0M755.9 470.8h0M756.7 494.4h0M888.8 389.7h0M749.7 450.6h0M881.0 384.6h0M758.6 424.6h0M827.1 401.3h0M738.2 442.6h0M902.4 382.9h0M808.0 418.0h0M720.8 434.1h0M705.0 368.0h0M915.3 395.2h0M777.5 412.5h0M773.3 416.8h0M868.9 422.6h0M728.1 480.2h0M736.5 454.6h0M778.9 450.4h0M866.7 428.0h0M913.7 386.1h0M823.0 419.5h0M826.0 408.2h0M893.7 403.8h0M789.9 427.0h0M751.5 501.0h0M742.5 495.6h0M751.5 478.7h0M700.2 365.8h0M744.2 491.1h0M758.8 460.7h0M798.7 446.1h0M815.8 411.3h0M828.3 385.1h0M853.7 416.4h0M820.4 407.9h0M901.2 397.6h0M844.7 408.5h0M903.0 399.6h0M801.7 451.3h0M749.1 465.4h0M774.6 428.3h0M776.4 444.8h0M818.6 387.4h0M873.8 426.0h0M750.8 475.5h0M720.0 442.2h0M884.4 375.0h0M692.4 463.5h0M914.7 405.5h0M742.7 467.6h0M761.6 410.3h0M680.0 439.7h0M742.2 484.2h0" stroke="#0d0887" opacity="0.9"/>
</g>
<g font-family="'Liberation Sans',sans-serif">
<text x="778" y="293.2" font-size="10.2" text-anchor="middle" textLength="40" lengthAdjust="spacingAndGlyphs" fill="#fff" stroke="#fff" stroke-opacity=".7" stroke-width="1.5" stroke-linejoin="round">Colegiales</text><text x="778" y="293.2" font-size="10.2" text-anchor="middle" textLength="40" lengthAdjust="spacingAndGlyphs" fill="#2a1b15" stroke="#2a1b15" stroke-width=".38">Colegiales</text>
<text x="885" y="292.6" font-size="10.2" text-anchor="middle" textLength="23" lengthAdjust="spacingAndGlyphs" fill="#fff" stroke="#fff" stroke-opacity=".7" stroke-width="1.5" stroke-linejoin="round">Retiro</text><text x="885" y="292.6" font-size="10.2" text-anchor="middle" textLength="23" lengthAdjust="spacingAndGlyphs" fill="#2a1b15" stroke="#2a1b15" stroke-width=".38">Retiro</text>
<text x="895" y="344.4" font-size="13.6" text-anchor="middle" textLength="37" lengthAdjust="spacingAndGlyphs" fill="#fff" stroke="#fff" stroke-opacity=".7" stroke-width="1.5" stroke-linejoin="round">Buenos</text><text x="895" y="344.4" font-size="13.6" text-anchor="middle" textLength="37" lengthAdjust="spacingAndGlyphs" fill="#2a1b15" stroke="#2a1b15" stroke-width=".38">Buenos</text>
<text x="895.3" y="359.9" font-size="13.6" text-anchor="middle" textLength="25" lengthAdjust="spacingAndGlyphs" fill="#fff" stroke="#fff" stroke-opacity=".7" stroke-width="1.5" stroke-linejoin="round">Aires</text><text x="895.3" y="359.9" font-size="13.6" text-anchor="middle" textLength="25" lengthAdjust="spacingAndGlyphs" fill="#2a1b15" stroke="#2a1b15" stroke-width=".38">Aires</text>
<text x="729.5" y="341.6" font-size="10.2" text-anchor="middle" textLength="17" lengthAdjust="spacingAndGlyphs" fill="#fff" stroke="#fff" stroke-opacity=".7" stroke-width="1.5" stroke-linejoin="round">Villa</text><text x="729.5" y="341.6" font-size="10.2" text-anchor="middle" textLength="17" lengthAdjust="spacingAndGlyphs" fill="#2a1b15" stroke="#2a1b15" stroke-width=".38">Villa</text>
<text x="729.5" y="353.1" font-size="10.2" text-anchor="middle" textLength="21" lengthAdjust="spacingAndGlyphs" fill="#fff" stroke="#fff" stroke-opacity=".7" stroke-width="1.5" stroke-linejoin="round">Santa</text><text x="729.5" y="353.1" font-size="10.2" text-anchor="middle" textLength="21" lengthAdjust="spacingAndGlyphs" fill="#2a1b15" stroke="#2a1b15" stroke-width=".38">Santa</text>
<text x="729.5" y="364.6" font-size="10.2" text-anchor="middle" textLength="15.5" lengthAdjust="spacingAndGlyphs" fill="#fff" stroke="#fff" stroke-opacity=".7" stroke-width="1.5" stroke-linejoin="round">Rita</text><text x="729.5" y="364.6" font-size="10.2" text-anchor="middle" textLength="15.5" lengthAdjust="spacingAndGlyphs" fill="#2a1b15" stroke="#2a1b15" stroke-width=".38">Rita</text>
<g font-style="italic" fill="#6f97bf" font-size="7.6"><text x="922" y="272.5" textLength="32" lengthAdjust="spacingAndGlyphs">Ante Pue</text><text x="920" y="283" textLength="34" lengthAdjust="spacingAndGlyphs">Buenos A</text></g>
<g fill="#6f6f6f" font-size="5.6" letter-spacing=".7" stroke="#e8e8e8" stroke-width=".8" paint-order="stroke"><text x="667" y="219.5" transform="rotate(-20 667 219.5)">Melo</text><text x="713.5" y="193.5" transform="rotate(-20 713.5 193.5)">Melo</text></g>
<rect x="646.4" y="322.6" width="22" height="8" rx=".8" fill="#fff" stroke="#666" stroke-width=".7"/><text x="657.4" y="328.6" font-size="5.3" font-weight="bold" text-anchor="middle" fill="#333">RNA001</text>
<rect x="688.9" y="386.8" width="17" height="8" rx=".8" fill="#fff" stroke="#666" stroke-width=".7"/><text x="697.4" y="392.8" font-size="5.3" font-weight="bold" text-anchor="middle" fill="#333">AU6</text>
<rect x="749.0" y="407.6" width="16" height="8" rx=".8" fill="#fff" stroke="#666" stroke-width=".7"/><text x="757" y="413.6" font-size="5.3" font-weight="bold" text-anchor="middle" fill="#333">AU2</text>
<rect x="860.9" y="364.4" width="17" height="8" rx=".8" fill="#fff" stroke="#666" stroke-width=".7"/><text x="869.4" y="370.4" font-size="5.3" font-weight="bold" text-anchor="middle" fill="#333">AU1</text>
<rect x="776.9" y="452.4" width="17" height="8" rx=".8" fill="#fff" stroke="#666" stroke-width=".7"/><text x="785.4" y="458.4" font-size="5.3" font-weight="bold" text-anchor="middle" fill="#333">A07</text>
<rect x="709.1" y="486.7" width="23" height="8" rx=".8" fill="#fff" stroke="#666" stroke-width=".7"/><text x="720.6" y="492.7" font-size="5.3" font-weight="bold" text-anchor="middle" fill="#333">RNA002</text>
<rect x="930.4" y="404.3" width="17.5" height="8" rx=".8" fill="#fff" stroke="#666" stroke-width=".7"/><text x="939.1" y="410.3" font-size="5.3" font-weight="bold" text-anchor="middle" fill="#333">RN1</text>
</g>
</g></svg>
<svg class="a" style="left:951px;top:310px" width="43" height="80" viewBox="951 310 43 80"><defs><linearGradient id="lg" x1="0" y1="1" x2="0" y2="0"><stop offset="0.0" stop-color="#0d0887"/><stop offset="0.1" stop-color="#41049d"/><stop offset="0.2" stop-color="#6a00a8"/><stop offset="0.3" stop-color="#8f0da4"/><stop offset="0.4" stop-color="#b12a90"/><stop offset="0.5" stop-color="#cc4778"/><stop offset="0.6" stop-color="#e16462"/><stop offset="0.7" stop-color="#f2844b"/><stop offset="0.8" stop-color="#fca636"/><stop offset="0.9" stop-color="#fcce25"/><stop offset="1.0" stop-color="#f0f921"/></linearGradient></defs><rect x="955.2" y="325.2" width="11.6" height="59.3" fill="url(#lg)"/><g stroke="#fff" stroke-width=".5"><path d="M955.2 374.7h2.3M964.5 374.7h2.3M955.2 358.8h2.3M964.5 358.8h2.3M955.2 343h2.3M964.5 343h2.3M955.2 327.2h2.3M964.5 327.2h2.3"/></g><g font-family="'Liberation Sans',sans-serif" fill="#222"><text x="954.6" y="320.8" font-size="7.4" textLength="35.2" lengthAdjust="spacingAndGlyphs">decil_NSE</text><g font-size="5.9" fill="#333"><text x="970.8" y="329.3">10.0</text><text x="970.8" y="345.1">7.5</text><text x="970.8" y="360.9">5.0</text><text x="970.8" y="376.8">2.5</text></g></g></svg>
</body>
</html>
